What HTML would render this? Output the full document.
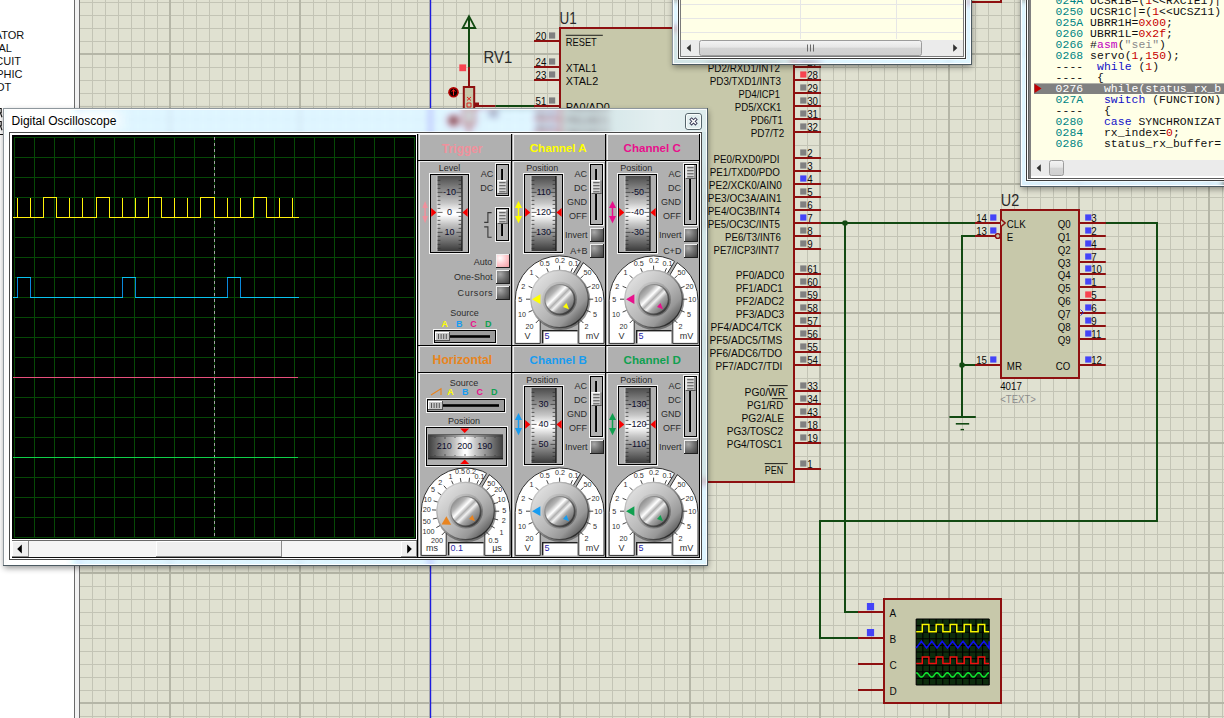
<!DOCTYPE html>
<html><head><meta charset="utf-8"><title>Digital Oscilloscope</title>
<style>
html,body{margin:0;padding:0;background:#fff;}
body{width:1224px;height:718px;overflow:hidden;position:relative;font-family:"Liberation Sans",sans-serif;}
svg{position:absolute;left:0;top:0;display:block;}
svg text{font-family:"Liberation Sans",sans-serif;}
svg text.m{font-family:"Liberation Mono",monospace;}
</style></head><body>
<svg width="1224" height="718" viewBox="0 0 1224 718">
<defs>
<filter id="blur6" color-interpolation-filters="sRGB" x="-5%" y="-5%" width="110%" height="110%"><feGaussianBlur stdDeviation="3.6"/><feComponentTransfer><feFuncR type="table" tableValues="0.357 0.417 0.477 0.537 0.597 0.657 0.717 0.777 0.837 0.897 1.000"/><feFuncG type="table" tableValues="0.271 0.351 0.431 0.511 0.591 0.671 0.751 0.831 0.911 0.991 1.000"/><feFuncB type="table" tableValues="0.306 0.396 0.486 0.576 0.666 0.756 0.846 0.936 1.000 1.000 1.000"/></feComponentTransfer></filter>
<filter id="sh" x="-10%" y="-10%" width="120%" height="120%"><feGaussianBlur stdDeviation="3"/></filter>
<filter id="glow" x="-20%" y="-60%" width="140%" height="220%"><feGaussianBlur stdDeviation="7 4"/></filter>
</defs>
<g id="schem">
<rect x="0" y="0" width="1224" height="718" fill="#ffffff"/>
<rect x="80" y="0" width="1144" height="718" fill="#e0e1d1"/>
<path d="M92.5 0V718M105.5 0V718M118.5 0V718M131.5 0V718M144.5 0V718M157.5 0V718M170.5 0V718M183.5 0V718M196.5 0V718M209.5 0V718M222.5 0V718M235.5 0V718M248.5 0V718M261.5 0V718M274.5 0V718M287.5 0V718M300.5 0V718M313.5 0V718M326.5 0V718M339.5 0V718M352.5 0V718M365.5 0V718M378.5 0V718M391.5 0V718M404.5 0V718M417.5 0V718M430.5 0V718M443.5 0V718M456.5 0V718M469.5 0V718M482.5 0V718M495.5 0V718M508.5 0V718M521.5 0V718M534.5 0V718M547.5 0V718M560.5 0V718M573.5 0V718M586.5 0V718M599.5 0V718M612.5 0V718M625.5 0V718M638.5 0V718M651.5 0V718M664.5 0V718M677.5 0V718M690.5 0V718M703.5 0V718M716.5 0V718M729.5 0V718M742.5 0V718M755.5 0V718M768.5 0V718M781.5 0V718M794.5 0V718M807.5 0V718M820.5 0V718M833.5 0V718M845.5 0V718M858.5 0V718M871.5 0V718M884.5 0V718M897.5 0V718M910.5 0V718M923.5 0V718M936.5 0V718M949.5 0V718M962.5 0V718M975.5 0V718M988.5 0V718M1001.5 0V718M1014.5 0V718M1027.5 0V718M1040.5 0V718M1053.5 0V718M1066.5 0V718M1079.5 0V718M1092.5 0V718M1105.5 0V718M1118.5 0V718M1131.5 0V718M1144.5 0V718M1157.5 0V718M1170.5 0V718M1183.5 0V718M1196.5 0V718M1209.5 0V718M1222.5 0V718M80 2.5H1224M80 15.5H1224M80 28.5H1224M80 41.5H1224M80 54.5H1224M80 67.5H1224M80 80.5H1224M80 93.5H1224M80 106.5H1224M80 119.5H1224M80 132.5H1224M80 145.5H1224M80 158.5H1224M80 171.5H1224M80 184.5H1224M80 197.5H1224M80 210.5H1224M80 223.5H1224M80 236.5H1224M80 249.5H1224M80 262.5H1224M80 274.5H1224M80 287.5H1224M80 300.5H1224M80 313.5H1224M80 326.5H1224M80 339.5H1224M80 352.5H1224M80 365.5H1224M80 378.5H1224M80 391.5H1224M80 404.5H1224M80 417.5H1224M80 430.5H1224M80 443.5H1224M80 456.5H1224M80 469.5H1224M80 482.5H1224M80 495.5H1224M80 508.5H1224M80 521.5H1224M80 534.5H1224M80 547.5H1224M80 560.5H1224M80 573.5H1224M80 586.5H1224M80 599.5H1224M80 612.5H1224M80 625.5H1224M80 638.5H1224M80 651.5H1224M80 664.5H1224M80 677.5H1224M80 690.5H1224M80 703.5H1224M80 716.5H1224" stroke="#c3c4b5" stroke-width="1" fill="none" shape-rendering="crispEdges"/>
<path d="M170 0V718M300 0V718M430 0V718M560 0V718M690 0V718M820 0V718M949 0V718M1079 0V718M1209 0V718M80 54H1224M80 184H1224M80 313H1224M80 443H1224M80 573H1224M80 703H1224" stroke="#b5b6a7" stroke-width="2" fill="none" shape-rendering="crispEdges"/>
<rect x="429.9" y="0" width="1.3" height="718" fill="#1c1ce0"/>
<rect x="0" y="0" width="74" height="718" fill="#ffffff"/>
<rect x="74" y="0" width="1" height="718" fill="#6a6a6a"/>
<rect x="75" y="0" width="4" height="718" fill="#f2f2f2"/>
<rect x="79" y="0" width="1" height="718" fill="#707070"/>





<path d="M-2 108.5h3.2v4.2h-3.2M0.4 112.7l1.6 4.6" stroke="#101010" stroke-width="1.1" fill="none"/>
<path d="M-2 121.5h3.2v4.2h-3.2M0.4 125.7l1.6 4.6" stroke="#101010" stroke-width="1.1" fill="none"/>
<rect x="0" y="134" width="3" height="1" fill="#101010"/>
<text x="24.3" y="38.7" font-size="11" fill="#101010" text-anchor="end">ATOR</text>
<text x="12.0" y="51.7" font-size="11" fill="#101010" text-anchor="end">AL</text>
<text x="21.0" y="64.7" font-size="11" fill="#101010" text-anchor="end">CUIT</text>
<text x="22.5" y="77.7" font-size="11" fill="#101010" text-anchor="end">PHIC</text>
<text x="11.2" y="90.7" font-size="11" fill="#101010" text-anchor="end">OT</text>
<rect x="900" y="-30" width="101.0" height="32.0" fill="#dde3c6" stroke="#8e1010" stroke-width="2"/>
<rect x="468.0" y="18.0" width="2" height="49.0" fill="#124a12"/>
<rect x="468.0" y="67.0" width="2" height="20.0" fill="#8e1010"/>
<path d="M469.0 16.2L462.7 28.0H475.3Z" fill="none" stroke="#124a12" stroke-width="1.8" stroke-linejoin="miter"/>
<rect x="459.3" y="64.4" width="6.8" height="6.8" fill="#f84450"/>
<rect x="463.8" y="87" width="10.4" height="38" fill="#c7c8aa" stroke="#8e1010" stroke-width="2"/>
<rect x="468.0" y="125.0" width="2" height="25.0" fill="#8e1010"/>
<circle cx="453.5" cy="120.6" r="5.6" fill="#b00000"/><circle cx="453.5" cy="120.6" r="3.6" fill="#100000"/>
<rect x="489" y="110" width="9" height="7" fill="#707878"/>
<path d="M467 97l4 3.5m0-3.5l-4 3.5M467 103h4v4h-4z" stroke="#e01010" stroke-width="0.9" fill="none"/>
<rect x="475" y="102.5" width="4" height="4" fill="#8e1010"/>
<rect x="475.0" y="105.0" width="20.5" height="2" fill="#8e1010"/>
<rect x="495.5" y="105.0" width="38.5" height="2" fill="#124a12"/>
<circle cx="453.5" cy="92.3" r="5.3" fill="#b00000"/><circle cx="453.5" cy="92.3" r="3.6" fill="#100000"/>
<path d="M453.5 95.3v-5.5m-1.8 2l1.8-2.2l1.8 2.2" stroke="#ff2020" stroke-width="1" fill="none"/>
<text x="483.6" y="62.9" font-size="15.9" fill="#2a2a2a" textLength="28.6" lengthAdjust="spacingAndGlyphs" >RV1</text>
<rect x="560.0" y="28.0" width="234.0" height="454.0" fill="#c7c8aa" stroke="#8e1010" stroke-width="2"/>
<text x="559.6" y="23.6" font-size="15.9" fill="#2a2a2a" textLength="17.2" lengthAdjust="spacingAndGlyphs" >U1</text>
<rect x="534.0" y="40.0" width="26.0" height="2" fill="#8e1010"/>
<text x="535.6" y="40.0" font-size="10.6" fill="#0a0a0a" textLength="10.8" lengthAdjust="spacingAndGlyphs" >20</text>
<rect x="549.0" y="32.4" width="6.2" height="6.2" fill="#808080"/>
<text x="565.8" y="45.9" font-size="10.6" fill="#0a0a0a" textLength="31.0" lengthAdjust="spacingAndGlyphs" >RESET</text>
<rect x="565.8" y="34.8" width="37.0" height="0.9" fill="#0a0a0a"/>
<rect x="534.0" y="66.0" width="26.0" height="2" fill="#8e1010"/>
<text x="535.6" y="66.0" font-size="10.6" fill="#0a0a0a" textLength="10.8" lengthAdjust="spacingAndGlyphs" >24</text>
<rect x="549.0" y="58.4" width="6.2" height="6.2" fill="#808080"/>
<text x="565.8" y="71.9" font-size="10.6" fill="#0a0a0a" textLength="31.0" lengthAdjust="spacingAndGlyphs" >XTAL1</text>
<rect x="534.0" y="79.0" width="26.0" height="2" fill="#8e1010"/>
<text x="535.6" y="79.0" font-size="10.6" fill="#0a0a0a" textLength="10.8" lengthAdjust="spacingAndGlyphs" >23</text>
<rect x="549.0" y="71.4" width="6.2" height="6.2" fill="#808080"/>
<text x="565.8" y="84.9" font-size="10.6" fill="#0a0a0a" textLength="32.4" lengthAdjust="spacingAndGlyphs" >XTAL2</text>
<rect x="534.0" y="105.0" width="26.0" height="2" fill="#8e1010"/>
<text x="535.6" y="105.0" font-size="10.6" fill="#0a0a0a" textLength="10.8" lengthAdjust="spacingAndGlyphs" >51</text>
<rect x="549.0" y="97.4" width="6.2" height="6.2" fill="#808080"/>
<text x="565.8" y="110.9" font-size="10.6" fill="#0a0a0a" textLength="44.0" lengthAdjust="spacingAndGlyphs" >PA0/AD0</text>
<rect x="534.0" y="118.0" width="26.0" height="2" fill="#8e1010"/>
<text x="535.6" y="118.0" font-size="10.6" fill="#0a0a0a" textLength="10.8" lengthAdjust="spacingAndGlyphs" >50</text>
<rect x="549.0" y="110.4" width="6.2" height="6.2" fill="#808080"/>
<text x="565.8" y="123.9" font-size="10.6" fill="#0a0a0a" textLength="44.0" lengthAdjust="spacingAndGlyphs" >PA1/AD1</text>
<rect x="534.0" y="131.0" width="26.0" height="2" fill="#8e1010"/>
<text x="535.6" y="131.0" font-size="10.6" fill="#0a0a0a" textLength="10.8" lengthAdjust="spacingAndGlyphs" >49</text>
<rect x="549.0" y="123.4" width="6.2" height="6.2" fill="#808080"/>
<text x="565.8" y="136.9" font-size="10.6" fill="#0a0a0a" textLength="44.0" lengthAdjust="spacingAndGlyphs" >PA2/AD2</text>
<rect x="794.0" y="66.0" width="27.0" height="2" fill="#8e1010"/>
<rect x="800.2" y="58.4" width="6.2" height="6.2" fill="#808080"/>
<text x="807.2" y="66.0" font-size="10.6" fill="#0a0a0a" textLength="10.8" lengthAdjust="spacingAndGlyphs" >27</text>
<text x="707.8" y="72.0" font-size="10.6" fill="#0a0a0a" textLength="72.1" lengthAdjust="spacingAndGlyphs" >PD2/RXD1/INT2</text>
<rect x="794.0" y="79.0" width="27.0" height="2" fill="#8e1010"/>
<rect x="800.2" y="71.4" width="6.2" height="6.2" fill="#f84450"/>
<text x="807.2" y="79.0" font-size="10.6" fill="#0a0a0a" textLength="10.8" lengthAdjust="spacingAndGlyphs" >28</text>
<text x="709.7" y="85.0" font-size="10.6" fill="#0a0a0a" textLength="71.2" lengthAdjust="spacingAndGlyphs" >PD3/TXD1/INT3</text>
<rect x="794.0" y="92.0" width="27.0" height="2" fill="#8e1010"/>
<rect x="800.2" y="84.4" width="6.2" height="6.2" fill="#808080"/>
<text x="807.2" y="92.0" font-size="10.6" fill="#0a0a0a" textLength="10.8" lengthAdjust="spacingAndGlyphs" >29</text>
<text x="738.6" y="98.0" font-size="10.6" fill="#0a0a0a" textLength="41.3" lengthAdjust="spacingAndGlyphs" >PD4/ICP1</text>
<rect x="794.0" y="105.0" width="27.0" height="2" fill="#8e1010"/>
<rect x="800.2" y="97.4" width="6.2" height="6.2" fill="#808080"/>
<text x="807.2" y="105.0" font-size="10.6" fill="#0a0a0a" textLength="10.8" lengthAdjust="spacingAndGlyphs" >30</text>
<text x="734.7" y="111.0" font-size="10.6" fill="#0a0a0a" textLength="46.8" lengthAdjust="spacingAndGlyphs" >PD5/XCK1</text>
<rect x="794.0" y="118.0" width="27.0" height="2" fill="#8e1010"/>
<rect x="800.2" y="110.4" width="6.2" height="6.2" fill="#808080"/>
<text x="807.2" y="118.0" font-size="10.6" fill="#0a0a0a" textLength="10.8" lengthAdjust="spacingAndGlyphs" >31</text>
<text x="750.7" y="124.0" font-size="10.6" fill="#0a0a0a" textLength="32.1" lengthAdjust="spacingAndGlyphs" >PD6/T1</text>
<rect x="794.0" y="131.0" width="27.0" height="2" fill="#8e1010"/>
<rect x="800.2" y="123.4" width="6.2" height="6.2" fill="#808080"/>
<text x="807.2" y="131.0" font-size="10.6" fill="#0a0a0a" textLength="10.8" lengthAdjust="spacingAndGlyphs" >32</text>
<text x="750.7" y="137.0" font-size="10.6" fill="#0a0a0a" textLength="33.5" lengthAdjust="spacingAndGlyphs" >PD7/T2</text>
<rect x="794.0" y="157.0" width="27.0" height="2" fill="#8e1010"/>
<rect x="800.2" y="149.4" width="6.2" height="6.2" fill="#808080"/>
<text x="807.2" y="157.0" font-size="10.6" fill="#0a0a0a" textLength="5.4" lengthAdjust="spacingAndGlyphs" >2</text>
<text x="713.6" y="163.0" font-size="10.6" fill="#0a0a0a" textLength="65.9" lengthAdjust="spacingAndGlyphs" >PE0/RXD0/PDI</text>
<rect x="794.0" y="170.0" width="27.0" height="2" fill="#8e1010"/>
<rect x="800.2" y="162.4" width="6.2" height="6.2" fill="#808080"/>
<text x="807.2" y="170.0" font-size="10.6" fill="#0a0a0a" textLength="5.4" lengthAdjust="spacingAndGlyphs" >3</text>
<text x="709.7" y="176.0" font-size="10.6" fill="#0a0a0a" textLength="70.2" lengthAdjust="spacingAndGlyphs" >PE1/TXD0/PDO</text>
<rect x="794.0" y="183.0" width="27.0" height="2" fill="#8e1010"/>
<rect x="800.2" y="175.4" width="6.2" height="6.2" fill="#4444f8"/>
<text x="807.2" y="183.0" font-size="10.6" fill="#0a0a0a" textLength="5.4" lengthAdjust="spacingAndGlyphs" >4</text>
<text x="708.8" y="189.0" font-size="10.6" fill="#0a0a0a" textLength="73.1" lengthAdjust="spacingAndGlyphs" >PE2/XCK0/AIN0</text>
<rect x="794.0" y="196.0" width="27.0" height="2" fill="#8e1010"/>
<rect x="800.2" y="188.4" width="6.2" height="6.2" fill="#808080"/>
<text x="807.2" y="196.0" font-size="10.6" fill="#0a0a0a" textLength="5.4" lengthAdjust="spacingAndGlyphs" >5</text>
<text x="707.8" y="202.0" font-size="10.6" fill="#0a0a0a" textLength="73.7" lengthAdjust="spacingAndGlyphs" >PE3/OC3A/AIN1</text>
<rect x="794.0" y="209.0" width="27.0" height="2" fill="#8e1010"/>
<rect x="800.2" y="201.4" width="6.2" height="6.2" fill="#808080"/>
<text x="807.2" y="209.0" font-size="10.6" fill="#0a0a0a" textLength="5.4" lengthAdjust="spacingAndGlyphs" >6</text>
<text x="707.8" y="215.0" font-size="10.6" fill="#0a0a0a" textLength="72.1" lengthAdjust="spacingAndGlyphs" >PE4/OC3B/INT4</text>
<rect x="794.0" y="222.0" width="27.0" height="2" fill="#8e1010"/>
<rect x="800.2" y="214.4" width="6.2" height="6.2" fill="#4444f8"/>
<text x="807.2" y="222.0" font-size="10.6" fill="#0a0a0a" textLength="5.4" lengthAdjust="spacingAndGlyphs" >7</text>
<text x="707.8" y="228.0" font-size="10.6" fill="#0a0a0a" textLength="72.1" lengthAdjust="spacingAndGlyphs" >PE5/OC3C/INT5</text>
<rect x="794.0" y="235.0" width="27.0" height="2" fill="#8e1010"/>
<rect x="800.2" y="227.4" width="6.2" height="6.2" fill="#808080"/>
<text x="807.2" y="235.0" font-size="10.6" fill="#0a0a0a" textLength="5.4" lengthAdjust="spacingAndGlyphs" >8</text>
<text x="725.0" y="241.0" font-size="10.6" fill="#0a0a0a" textLength="55.9" lengthAdjust="spacingAndGlyphs" >PE6/T3/INT6</text>
<rect x="794.0" y="248.0" width="27.0" height="2" fill="#8e1010"/>
<rect x="800.2" y="240.4" width="6.2" height="6.2" fill="#808080"/>
<text x="807.2" y="248.0" font-size="10.6" fill="#0a0a0a" textLength="5.4" lengthAdjust="spacingAndGlyphs" >9</text>
<text x="713.6" y="254.0" font-size="10.6" fill="#0a0a0a" textLength="65.4" lengthAdjust="spacingAndGlyphs" >PE7/ICP3/INT7</text>
<rect x="794.0" y="273.0" width="27.0" height="2" fill="#8e1010"/>
<rect x="800.2" y="265.4" width="6.2" height="6.2" fill="#808080"/>
<text x="807.2" y="273.0" font-size="10.6" fill="#0a0a0a" textLength="10.8" lengthAdjust="spacingAndGlyphs" >61</text>
<text x="735.7" y="279.0" font-size="10.6" fill="#0a0a0a" textLength="48.5" lengthAdjust="spacingAndGlyphs" >PF0/ADC0</text>
<rect x="794.0" y="286.0" width="27.0" height="2" fill="#8e1010"/>
<rect x="800.2" y="278.4" width="6.2" height="6.2" fill="#808080"/>
<text x="807.2" y="286.0" font-size="10.6" fill="#0a0a0a" textLength="10.8" lengthAdjust="spacingAndGlyphs" >60</text>
<text x="735.7" y="292.0" font-size="10.6" fill="#0a0a0a" textLength="47.1" lengthAdjust="spacingAndGlyphs" >PF1/ADC1</text>
<rect x="794.0" y="299.0" width="27.0" height="2" fill="#8e1010"/>
<rect x="800.2" y="291.4" width="6.2" height="6.2" fill="#808080"/>
<text x="807.2" y="299.0" font-size="10.6" fill="#0a0a0a" textLength="10.8" lengthAdjust="spacingAndGlyphs" >59</text>
<text x="735.7" y="305.0" font-size="10.6" fill="#0a0a0a" textLength="48.5" lengthAdjust="spacingAndGlyphs" >PF2/ADC2</text>
<rect x="794.0" y="312.0" width="27.0" height="2" fill="#8e1010"/>
<rect x="800.2" y="304.4" width="6.2" height="6.2" fill="#808080"/>
<text x="807.2" y="312.0" font-size="10.6" fill="#0a0a0a" textLength="10.8" lengthAdjust="spacingAndGlyphs" >58</text>
<text x="735.7" y="318.0" font-size="10.6" fill="#0a0a0a" textLength="48.5" lengthAdjust="spacingAndGlyphs" >PF3/ADC3</text>
<rect x="794.0" y="325.0" width="27.0" height="2" fill="#8e1010"/>
<rect x="800.2" y="317.4" width="6.2" height="6.2" fill="#808080"/>
<text x="807.2" y="325.0" font-size="10.6" fill="#0a0a0a" textLength="10.8" lengthAdjust="spacingAndGlyphs" >57</text>
<text x="710.6" y="331.0" font-size="10.6" fill="#0a0a0a" textLength="71.3" lengthAdjust="spacingAndGlyphs" >PF4/ADC4/TCK</text>
<rect x="794.0" y="338.0" width="27.0" height="2" fill="#8e1010"/>
<rect x="800.2" y="330.4" width="6.2" height="6.2" fill="#808080"/>
<text x="807.2" y="338.0" font-size="10.6" fill="#0a0a0a" textLength="10.8" lengthAdjust="spacingAndGlyphs" >56</text>
<text x="709.5" y="344.0" font-size="10.6" fill="#0a0a0a" textLength="72.7" lengthAdjust="spacingAndGlyphs" >PF5/ADC5/TMS</text>
<rect x="794.0" y="351.0" width="27.0" height="2" fill="#8e1010"/>
<rect x="800.2" y="343.4" width="6.2" height="6.2" fill="#808080"/>
<text x="807.2" y="351.0" font-size="10.6" fill="#0a0a0a" textLength="10.8" lengthAdjust="spacingAndGlyphs" >55</text>
<text x="709.5" y="357.0" font-size="10.6" fill="#0a0a0a" textLength="72.7" lengthAdjust="spacingAndGlyphs" >PF6/ADC6/TDO</text>
<rect x="794.0" y="364.0" width="27.0" height="2" fill="#8e1010"/>
<rect x="800.2" y="356.4" width="6.2" height="6.2" fill="#808080"/>
<text x="807.2" y="364.0" font-size="10.6" fill="#0a0a0a" textLength="10.8" lengthAdjust="spacingAndGlyphs" >54</text>
<text x="715.5" y="370.0" font-size="10.6" fill="#0a0a0a" textLength="66.7" lengthAdjust="spacingAndGlyphs" >PF7/ADC7/TDI</text>
<rect x="794.0" y="390.0" width="27.0" height="2" fill="#8e1010"/>
<rect x="800.2" y="382.4" width="6.2" height="6.2" fill="#808080"/>
<text x="807.2" y="390.0" font-size="10.6" fill="#0a0a0a" textLength="10.8" lengthAdjust="spacingAndGlyphs" >33</text>
<text x="744.6" y="396.0" font-size="10.6" fill="#0a0a0a" textLength="40.6" lengthAdjust="spacingAndGlyphs" >PG0/WR</text>
<rect x="794.0" y="403.0" width="27.0" height="2" fill="#8e1010"/>
<rect x="800.2" y="395.4" width="6.2" height="6.2" fill="#808080"/>
<text x="807.2" y="403.0" font-size="10.6" fill="#0a0a0a" textLength="10.8" lengthAdjust="spacingAndGlyphs" >34</text>
<text x="746.9" y="409.0" font-size="10.6" fill="#0a0a0a" textLength="36.3" lengthAdjust="spacingAndGlyphs" >PG1/RD</text>
<rect x="794.0" y="416.0" width="27.0" height="2" fill="#8e1010"/>
<rect x="800.2" y="408.4" width="6.2" height="6.2" fill="#808080"/>
<text x="807.2" y="416.0" font-size="10.6" fill="#0a0a0a" textLength="10.8" lengthAdjust="spacingAndGlyphs" >43</text>
<text x="741.4" y="422.0" font-size="10.6" fill="#0a0a0a" textLength="42.6" lengthAdjust="spacingAndGlyphs" >PG2/ALE</text>
<rect x="794.0" y="429.0" width="27.0" height="2" fill="#8e1010"/>
<rect x="800.2" y="421.4" width="6.2" height="6.2" fill="#808080"/>
<text x="807.2" y="429.0" font-size="10.6" fill="#0a0a0a" textLength="10.8" lengthAdjust="spacingAndGlyphs" >18</text>
<text x="726.8" y="435.0" font-size="10.6" fill="#0a0a0a" textLength="56.4" lengthAdjust="spacingAndGlyphs" >PG3/TOSC2</text>
<rect x="794.0" y="442.0" width="27.0" height="2" fill="#8e1010"/>
<rect x="800.2" y="434.4" width="6.2" height="6.2" fill="#808080"/>
<text x="807.2" y="442.0" font-size="10.6" fill="#0a0a0a" textLength="10.8" lengthAdjust="spacingAndGlyphs" >19</text>
<text x="726.8" y="448.0" font-size="10.6" fill="#0a0a0a" textLength="55.4" lengthAdjust="spacingAndGlyphs" >PG4/TOSC1</text>
<rect x="794.0" y="468.0" width="27.0" height="2" fill="#8e1010"/>
<rect x="800.2" y="460.4" width="6.2" height="6.2" fill="#808080"/>
<text x="807.2" y="468.0" font-size="10.6" fill="#0a0a0a" textLength="5.4" lengthAdjust="spacingAndGlyphs" >1</text>
<text x="764.7" y="474.0" font-size="10.6" fill="#0a0a0a" textLength="18.5" lengthAdjust="spacingAndGlyphs" >PEN</text>
<rect x="768.9" y="385.2" width="18.8" height="0.9" fill="#0a0a0a"/>
<rect x="771.9" y="398.2" width="15.8" height="0.9" fill="#0a0a0a"/>
<rect x="764.7" y="463.2" width="23.0" height="0.9" fill="#0a0a0a"/>
<rect x="821.0" y="222.0" width="154.0" height="2" fill="#124a12"/>
<rect x="842.4" y="220.4" width="5.2" height="5.2" rx="1.6" fill="#124a12"/>
<rect x="844.0" y="223.0" width="2" height="389.0" fill="#124a12"/>
<rect x="844.0" y="611.0" width="14.0" height="2" fill="#124a12"/>
<rect x="819.0" y="637.0" width="39.0" height="2" fill="#124a12"/>
<rect x="819.0" y="521.0" width="2" height="118.0" fill="#124a12"/>
<rect x="819.0" y="520.0" width="339.0" height="2" fill="#124a12"/>
<rect x="1156.0" y="223.0" width="2" height="298.0" fill="#124a12"/>
<rect x="1105.0" y="222.0" width="53.0" height="2" fill="#124a12"/>
<rect x="1001.0" y="210.0" width="78.0" height="168.0" fill="#c7c8aa" stroke="#8e1010" stroke-width="2"/>
<text x="1000.8" y="205.6" font-size="15.9" fill="#2a2a2a" textLength="18.4" lengthAdjust="spacingAndGlyphs" >U2</text>
<rect x="975.0" y="222.0" width="26.0" height="2" fill="#8e1010"/>
<text x="976.2" y="222.0" font-size="10.6" fill="#0a0a0a" textLength="10.8" lengthAdjust="spacingAndGlyphs" >14</text>
<rect x="990.2" y="214.4" width="6.2" height="6.2" fill="#4444f8"/>
<text x="1006.8" y="228.0" font-size="10.6" fill="#0a0a0a" textLength="18.9" lengthAdjust="spacingAndGlyphs" >CLK</text>
<rect x="975.0" y="235.0" width="26.0" height="2" fill="#8e1010"/>
<text x="976.2" y="235.0" font-size="10.6" fill="#0a0a0a" textLength="10.8" lengthAdjust="spacingAndGlyphs" >13</text>
<rect x="990.2" y="227.4" width="6.2" height="6.2" fill="#4444f8"/>
<text x="1006.8" y="241.0" font-size="10.6" fill="#0a0a0a" textLength="6.5" lengthAdjust="spacingAndGlyphs" >E</text>
<rect x="975.0" y="364.0" width="26.0" height="2" fill="#8e1010"/>
<text x="976.2" y="364.0" font-size="10.6" fill="#0a0a0a" textLength="10.8" lengthAdjust="spacingAndGlyphs" >15</text>
<rect x="990.2" y="356.4" width="6.2" height="6.2" fill="#4444f8"/>
<text x="1006.8" y="370.0" font-size="10.6" fill="#0a0a0a" textLength="15.1" lengthAdjust="spacingAndGlyphs" >MR</text>
<path d="M1001.0 219.4l4.2 3.6l-4.2 3.6" fill="#c7c8aa" stroke="#8e1010" stroke-width="1.4"/>
<circle cx="997.8" cy="236.0" r="2.4" fill="#c7c8aa" stroke="#8e1010" stroke-width="1.4"/>
<rect x="1079.0" y="222.0" width="26.8" height="2" fill="#8e1010"/>
<rect x="1085.2" y="214.4" width="6.2" height="6.2" fill="#4444f8"/>
<text x="1091.2" y="222.0" font-size="10.6" fill="#0a0a0a" textLength="5.4" lengthAdjust="spacingAndGlyphs" >3</text>
<text x="1057.8" y="228.0" font-size="10.6" fill="#0a0a0a" textLength="12.9" lengthAdjust="spacingAndGlyphs" >Q0</text>
<rect x="1079.0" y="235.0" width="26.8" height="2" fill="#8e1010"/>
<rect x="1085.2" y="227.4" width="6.2" height="6.2" fill="#4444f8"/>
<text x="1091.2" y="235.0" font-size="10.6" fill="#0a0a0a" textLength="5.4" lengthAdjust="spacingAndGlyphs" >2</text>
<text x="1057.8" y="241.0" font-size="10.6" fill="#0a0a0a" textLength="12.9" lengthAdjust="spacingAndGlyphs" >Q1</text>
<rect x="1079.0" y="248.0" width="26.8" height="2" fill="#8e1010"/>
<rect x="1085.2" y="240.4" width="6.2" height="6.2" fill="#4444f8"/>
<text x="1091.2" y="248.0" font-size="10.6" fill="#0a0a0a" textLength="5.4" lengthAdjust="spacingAndGlyphs" >4</text>
<text x="1057.8" y="254.0" font-size="10.6" fill="#0a0a0a" textLength="12.9" lengthAdjust="spacingAndGlyphs" >Q2</text>
<rect x="1079.0" y="261.0" width="26.8" height="2" fill="#8e1010"/>
<rect x="1085.2" y="253.4" width="6.2" height="6.2" fill="#4444f8"/>
<text x="1091.2" y="261.0" font-size="10.6" fill="#0a0a0a" textLength="5.4" lengthAdjust="spacingAndGlyphs" >7</text>
<text x="1057.8" y="267.0" font-size="10.6" fill="#0a0a0a" textLength="12.9" lengthAdjust="spacingAndGlyphs" >Q3</text>
<rect x="1079.0" y="273.0" width="26.8" height="2" fill="#8e1010"/>
<rect x="1085.2" y="265.4" width="6.2" height="6.2" fill="#4444f8"/>
<text x="1091.2" y="273.0" font-size="10.6" fill="#0a0a0a" textLength="10.8" lengthAdjust="spacingAndGlyphs" >10</text>
<text x="1057.8" y="279.0" font-size="10.6" fill="#0a0a0a" textLength="12.9" lengthAdjust="spacingAndGlyphs" >Q4</text>
<rect x="1079.0" y="286.0" width="26.8" height="2" fill="#8e1010"/>
<rect x="1085.2" y="278.4" width="6.2" height="6.2" fill="#4444f8"/>
<text x="1091.2" y="286.0" font-size="10.6" fill="#0a0a0a" textLength="5.4" lengthAdjust="spacingAndGlyphs" >1</text>
<text x="1057.8" y="292.0" font-size="10.6" fill="#0a0a0a" textLength="12.9" lengthAdjust="spacingAndGlyphs" >Q5</text>
<rect x="1079.0" y="299.0" width="26.8" height="2" fill="#8e1010"/>
<rect x="1085.2" y="291.4" width="6.2" height="6.2" fill="#f84450"/>
<text x="1091.2" y="299.0" font-size="10.6" fill="#0a0a0a" textLength="5.4" lengthAdjust="spacingAndGlyphs" >5</text>
<text x="1057.8" y="305.0" font-size="10.6" fill="#0a0a0a" textLength="12.9" lengthAdjust="spacingAndGlyphs" >Q6</text>
<rect x="1079.0" y="312.0" width="26.8" height="2" fill="#8e1010"/>
<rect x="1085.2" y="304.4" width="6.2" height="6.2" fill="#4444f8"/>
<text x="1091.2" y="312.0" font-size="10.6" fill="#0a0a0a" textLength="5.4" lengthAdjust="spacingAndGlyphs" >6</text>
<text x="1057.8" y="318.0" font-size="10.6" fill="#0a0a0a" textLength="12.9" lengthAdjust="spacingAndGlyphs" >Q7</text>
<rect x="1079.0" y="325.0" width="26.8" height="2" fill="#8e1010"/>
<rect x="1085.2" y="317.4" width="6.2" height="6.2" fill="#4444f8"/>
<text x="1091.2" y="325.0" font-size="10.6" fill="#0a0a0a" textLength="5.4" lengthAdjust="spacingAndGlyphs" >9</text>
<text x="1057.8" y="331.0" font-size="10.6" fill="#0a0a0a" textLength="12.9" lengthAdjust="spacingAndGlyphs" >Q8</text>
<rect x="1079.0" y="338.0" width="26.8" height="2" fill="#8e1010"/>
<rect x="1085.2" y="330.4" width="6.2" height="6.2" fill="#4444f8"/>
<text x="1091.2" y="338.0" font-size="10.6" fill="#0a0a0a" textLength="10.1" lengthAdjust="spacingAndGlyphs" >11</text>
<text x="1057.8" y="344.0" font-size="10.6" fill="#0a0a0a" textLength="12.9" lengthAdjust="spacingAndGlyphs" >Q9</text>
<rect x="1079.0" y="364.0" width="26.8" height="2" fill="#8e1010"/>
<rect x="1085.2" y="356.4" width="6.2" height="6.2" fill="#4444f8"/>
<text x="1091.2" y="364.0" font-size="10.6" fill="#0a0a0a" textLength="10.8" lengthAdjust="spacingAndGlyphs" >12</text>
<text x="1055.8" y="370.0" font-size="10.6" fill="#0a0a0a" textLength="14.5" lengthAdjust="spacingAndGlyphs" >CO</text>
<path d="M1080.5 309.5l3 3l-3 3.2" stroke="#2020d0" stroke-width="0.9" fill="none"/>
<text x="1000.2" y="389.8" font-size="10.6" fill="#0a0a0a" textLength="21.6" lengthAdjust="spacingAndGlyphs" >4017</text>
<text x="1000.2" y="403.0" font-size="10.6" fill="#8c8c8c" textLength="35.8" lengthAdjust="spacingAndGlyphs" >&lt;TEXT&gt;</text>
<rect x="961.0" y="235.0" width="14.0" height="2" fill="#124a12"/>
<rect x="961.0" y="235.0" width="2" height="182.0" fill="#124a12"/>
<rect x="962.0" y="364.0" width="13.0" height="2" fill="#124a12"/>
<rect x="959.4" y="362.4" width="5.2" height="5.2" rx="1.6" fill="#124a12"/>
<rect x="949.4" y="416.0" width="26.4" height="2" fill="#124a12"/>
<rect x="955.8" y="423.0" width="13.4" height="1.6" fill="#124a12"/>
<rect x="960.6" y="428.9" width="3.4" height="1.4" fill="#124a12"/>
<rect x="884.0" y="599.0" width="117.0" height="104.0" fill="#c7c8aa" stroke="#8e1010" stroke-width="2"/>
<rect x="858.0" y="611.0" width="26.0" height="2" fill="#8e1010"/>
<text x="889.6" y="617.0" font-size="10" fill="#0a0a0a" text-anchor="start" >A</text>
<rect x="866.9" y="603.0" width="7.2" height="7.2" fill="#4444f8"/>
<rect x="858.0" y="637.0" width="26.0" height="2" fill="#8e1010"/>
<text x="889.6" y="643.0" font-size="10" fill="#0a0a0a" text-anchor="start" >B</text>
<rect x="866.9" y="629.0" width="7.2" height="7.2" fill="#4444f8"/>
<rect x="858.0" y="663.0" width="26.0" height="2" fill="#8e1010"/>
<text x="889.6" y="669.0" font-size="10" fill="#0a0a0a" text-anchor="start" >C</text>
<rect x="858.0" y="689.0" width="26.0" height="2" fill="#8e1010"/>
<text x="889.6" y="695.0" font-size="10" fill="#0a0a0a" text-anchor="start" >D</text>
<rect x="916.2" y="619.0" width="73.0" height="66.0" fill="#0d2c0d"/>
<path d="M916.20 619.0V685.0M922.84 619.0V685.0M929.47 619.0V685.0M936.11 619.0V685.0M942.75 619.0V685.0M949.38 619.0V685.0M956.02 619.0V685.0M962.65 619.0V685.0M969.29 619.0V685.0M975.93 619.0V685.0M982.56 619.0V685.0M989.20 619.0V685.0M916.2 619.00H989.2M916.2 625.60H989.2M916.2 632.20H989.2M916.2 638.80H989.2M916.2 645.40H989.2M916.2 652.00H989.2M916.2 658.60H989.2M916.2 665.20H989.2M916.2 671.80H989.2M916.2 678.40H989.2M916.2 685.00H989.2" stroke="#000" stroke-width="1.1" fill="none"/>
<path d="M916.2 631.8H922.3V624.4H928.9V631.8H936.2V624.4H942.9V631.8H950.2V624.4H956.8V631.8H964.2V624.4H970.8V631.8H978.1V624.4H984.7V631.8H989.2" stroke="#f8f800" stroke-width="1.5" fill="none" stroke-linejoin="miter"/>
<path d="M916.2 648L921.4 641.2L926.6 648L931.8 641.2L937.0 648L942.2 641.2L947.4 648L952.6 641.2L957.8 648L963.0 641.2L968.2 648L973.4 641.2L978.6 648L983.8 641.2L989.0 648L989.2 641.2" stroke="#1010f0" stroke-width="1.5" fill="none"/>
<path d="M916.2 663.6H922.3V657.0H928.9V663.6H936.2V657.0H942.9V663.6H950.2V657.0H956.8V663.6H964.2V657.0H970.8V663.6H978.1V657.0H984.7V663.6H989.2" stroke="#f01010" stroke-width="1.5" fill="none" stroke-linejoin="miter"/>
<path d="M916.2 672.70L917.0 672.95L917.8 673.65L918.6 674.63L919.4 675.68L920.2 676.55L921.0 677.04L921.8 677.04L922.6 676.55L923.4 675.68L924.2 674.63L925.0 673.65L925.8 672.95L926.6 672.70L927.4 672.95L928.2 673.65L929.0 674.63L929.8 675.68L930.6 676.55L931.4 677.04L932.2 677.04L933.0 676.55L933.8 675.68L934.6 674.63L935.4 673.65L936.2 672.95L937.0 672.70L937.8 672.95L938.6 673.65L939.4 674.63L940.2 675.68L941.0 676.55L941.8 677.04L942.6 677.04L943.4 676.55L944.2 675.68L945.0 674.63L945.8 673.65L946.6 672.95L947.4 672.70L948.2 672.95L949.0 673.65L949.8 674.63L950.6 675.68L951.4 676.55L952.2 677.04L953.0 677.04L953.8 676.55L954.6 675.68L955.4 674.63L956.2 673.65L957.0 672.95L957.8 672.70L958.6 672.95L959.4 673.65L960.2 674.63L961.0 675.68L961.8 676.55L962.6 677.04L963.4 677.04L964.2 676.55L965.0 675.68L965.8 674.63L966.6 673.65L967.4 672.95L968.2 672.70L969.0 672.95L969.8 673.65L970.6 674.63L971.4 675.68L972.2 676.55L973.0 677.04L973.8 677.04L974.6 676.55L975.4 675.68L976.2 674.63L977.0 673.65L977.8 672.95L978.6 672.70L979.4 672.95L980.2 673.65L981.0 674.63L981.8 675.68L982.6 676.55L983.4 677.04L984.2 677.04L985.0 676.55L985.8 675.68L986.6 674.63L987.4 673.65L988.2 672.95L989.0 672.70" stroke="#10e830" stroke-width="1.5" fill="none"/>
</g>
<defs>
<clipPath id="frames">
<rect x="672" y="-30" width="300" height="95"/>
<rect x="1020" y="-30" width="240" height="217"/>
<rect x="3" y="108" width="705" height="458"/>
</clipPath>
<linearGradient id="sbthumb" x1="0" y1="0" x2="0" y2="1"><stop offset="0" stop-color="#f4f4f4"/><stop offset="0.45" stop-color="#e6e6e6"/><stop offset="0.5" stop-color="#d4d4d4"/><stop offset="1" stop-color="#cfcfcf"/></linearGradient>
</defs>
<rect x="673" y="-27" width="299" height="94" fill="#000" opacity="0.42" filter="url(#sh)"/>
<rect x="1021" y="-27" width="239" height="216" fill="#000" opacity="0.42" filter="url(#sh)"/>
<rect x="4" y="111" width="704" height="457" fill="#000" opacity="0.42" filter="url(#sh)"/>
<g clip-path="url(#frames)">
<g filter="url(#blur6)"><use href="#schem"/></g>
<rect x="2" y="111" width="118" height="19" fill="#ffffff" opacity="0.9" filter="url(#glow)"/>
<linearGradient id="tbhl" x1="0" y1="0" x2="1" y2="0"><stop offset="0" stop-color="#fff" stop-opacity="0"/><stop offset="0.6" stop-color="#fff" stop-opacity="0.4"/><stop offset="1" stop-color="#fff" stop-opacity="0.25"/></linearGradient>
<rect x="590" y="110" width="117" height="22" fill="url(#tbhl)"/>
</g>
<rect x="672" y="-30" width="300" height="1" fill="#8e979d"/><rect x="672" y="-30" width="1" height="95" fill="#8e979d"/>
<rect x="971" y="-30" width="1" height="95" fill="#4c5a62"/><rect x="672" y="64" width="300" height="1" fill="#4c5a62"/>
<rect x="673.5" y="-28.5" width="297" height="92" fill="none" stroke="#ffffff" stroke-opacity="0.9" stroke-width="1"/>
<rect x="678.5" y="-20.5" width="287" height="79" fill="none" stroke="#3c3c3c" stroke-width="1"/>
<rect x="677.5" y="-21.5" width="289" height="81" fill="none" stroke="#ffffff" stroke-opacity="0.55" stroke-width="1"/>
<rect x="679" y="-20" width="286" height="78" fill="#ffffff"/>
<rect x="680" y="-20" width="284" height="77" fill="#7a7a7a"/>
<rect x="681" y="-20" width="282" height="76" fill="#ffffe7"/>
<rect x="681" y="4" width="282" height="1" fill="#e6e6e6"/>
<rect x="681" y="18" width="282" height="1" fill="#e6e6e6"/>
<rect x="681" y="32" width="282" height="1" fill="#e6e6e6"/>
<rect x="800" y="-5" width="1" height="44" fill="#e6e6e6"/>
<rect x="896" y="-5" width="1" height="44" fill="#e6e6e6"/>
<rect x="681" y="40" width="282" height="16" fill="#ebebeb"/>
<path d="M686.6 48.0l4.2 -3.8v7.6z" fill="#303030"/>
<path d="M957.4 48.0l-4.2 -3.8v7.6z" fill="#303030"/>
<rect x="699.5" y="40.5" width="222" height="15" rx="2" fill="url(#sbthumb)" stroke="#9c9c9c" stroke-width="1"/>
<rect x="807.0" y="44.5" width="1" height="7" fill="#6a6a6a"/>
<rect x="810.0" y="44.5" width="1" height="7" fill="#6a6a6a"/>
<rect x="813.0" y="44.5" width="1" height="7" fill="#6a6a6a"/>
<rect x="806" y="44.5" width="9" height="7" fill="none"/>
<rect x="1020" y="-30" width="240" height="1" fill="#8e979d"/><rect x="1020" y="-30" width="1" height="217" fill="#8e979d"/>
<rect x="1259" y="-30" width="1" height="217" fill="#4c5a62"/><rect x="1020" y="186" width="240" height="1" fill="#4c5a62"/>
<rect x="1021.5" y="-28.5" width="237" height="214" fill="none" stroke="#ffffff" stroke-opacity="0.9" stroke-width="1"/>
<rect x="1026.5" y="-20.5" width="214" height="201" fill="none" stroke="#3c3c3c" stroke-width="1"/>
<rect x="1025.5" y="-21.5" width="216" height="203" fill="none" stroke="#ffffff" stroke-opacity="0.55" stroke-width="1"/>
<rect x="1027" y="-20" width="213" height="200" fill="#ffffff"/>
<rect x="1028" y="-20" width="212" height="199" fill="#5c5c5c"/>
<rect x="1029" y="-20" width="211" height="198" fill="#808080"/>
<rect x="1031" y="-20" width="209" height="198" fill="#ffffff"/>
<rect x="1031" y="-20" width="209" height="196" fill="#ffffe7"/>
<rect x="1031" y="160" width="219" height="16" fill="#ebebeb"/>
<path d="M1036.6 168.0l4.2 -3.8v7.6z" fill="#303030"/>
<path d="M1244.4 168.0l-4.2 -3.8v7.6z" fill="#303030"/>
<rect x="1049.5" y="160.5" width="14" height="15" rx="2" fill="url(#sbthumb)" stroke="#9c9c9c" stroke-width="1"/>
<g class="m" font-size="11.4" xml:space="preserve">
<text class="m" x="1055.6" y="4.1" fill="#008484" textLength="27.6" lengthAdjust="spacing">024A</text>
<text class="m" x="1090.1" y="4.1" fill="#101010" textLength="55.2" lengthAdjust="spacing">UCSR1B=(</text>
<text class="m" x="1145.3" y="4.1" fill="#c80000" textLength="6.9" lengthAdjust="spacing">1</text>
<text class="m" x="1152.2" y="4.1" fill="#101010" textLength="69.0" lengthAdjust="spacing">&lt;&lt;RXCIE1)|</text>
<text class="m" x="1055.6" y="15.1" fill="#008484" textLength="27.6" lengthAdjust="spacing">0250</text>
<text class="m" x="1090.1" y="15.1" fill="#101010" textLength="62.1" lengthAdjust="spacing">UCSR1C|=(</text>
<text class="m" x="1152.2" y="15.1" fill="#c80000" textLength="6.9" lengthAdjust="spacing">1</text>
<text class="m" x="1159.1" y="15.1" fill="#101010" textLength="62.1" lengthAdjust="spacing">&lt;&lt;UCSZ11)</text>
<text class="m" x="1055.6" y="26.1" fill="#008484" textLength="27.6" lengthAdjust="spacing">025A</text>
<text class="m" x="1090.1" y="26.1" fill="#101010" textLength="48.3" lengthAdjust="spacing">UBRR1H=</text>
<text class="m" x="1138.4" y="26.1" fill="#c80000" textLength="27.6" lengthAdjust="spacing">0x00</text>
<text class="m" x="1166.0" y="26.1" fill="#101010" textLength="6.9" lengthAdjust="spacing">;</text>
<text class="m" x="1055.6" y="37.1" fill="#008484" textLength="27.6" lengthAdjust="spacing">0260</text>
<text class="m" x="1090.1" y="37.1" fill="#101010" textLength="48.3" lengthAdjust="spacing">UBRR1L=</text>
<text class="m" x="1138.4" y="37.1" fill="#c80000" textLength="27.6" lengthAdjust="spacing">0x2f</text>
<text class="m" x="1166.0" y="37.1" fill="#101010" textLength="6.9" lengthAdjust="spacing">;</text>
<text class="m" x="1055.6" y="48.1" fill="#008484" textLength="27.6" lengthAdjust="spacing">0266</text>
<text class="m" x="1090.1" y="48.1" fill="#101010" textLength="6.9" lengthAdjust="spacing">#</text>
<text class="m" x="1097.0" y="48.1" fill="#c000c0" textLength="20.7" lengthAdjust="spacing">asm</text>
<text class="m" x="1117.7" y="48.1" fill="#101010" textLength="6.9" lengthAdjust="spacing">(</text>
<text class="m" x="1124.6" y="48.1" fill="#8a8a8a" textLength="34.5" lengthAdjust="spacing">"sei"</text>
<text class="m" x="1159.1" y="48.1" fill="#101010" textLength="6.9" lengthAdjust="spacing">)</text>
<text class="m" x="1055.6" y="59.1" fill="#008484" textLength="27.6" lengthAdjust="spacing">0268</text>
<text class="m" x="1090.1" y="59.1" fill="#101010" textLength="41.4" lengthAdjust="spacing">servo(</text>
<text class="m" x="1131.5" y="59.1" fill="#c80000" textLength="6.9" lengthAdjust="spacing">1</text>
<text class="m" x="1138.4" y="59.1" fill="#101010" textLength="6.9" lengthAdjust="spacing">,</text>
<text class="m" x="1145.3" y="59.1" fill="#c80000" textLength="20.7" lengthAdjust="spacing">150</text>
<text class="m" x="1166.0" y="59.1" fill="#101010" textLength="13.8" lengthAdjust="spacing">);</text>
<text class="m" x="1055.6" y="70.1" fill="#101010" textLength="27.6" lengthAdjust="spacing">----</text>
<text class="m" x="1097.0" y="70.1" fill="#1010c8" textLength="34.5" lengthAdjust="spacing">while</text>
<text class="m" x="1138.4" y="70.1" fill="#101010" textLength="6.9" lengthAdjust="spacing">(</text>
<text class="m" x="1145.3" y="70.1" fill="#c80000" textLength="6.9" lengthAdjust="spacing">1</text>
<text class="m" x="1152.2" y="70.1" fill="#101010" textLength="6.9" lengthAdjust="spacing">)</text>
<text class="m" x="1055.6" y="81.1" fill="#101010" textLength="27.6" lengthAdjust="spacing">----</text>
<text class="m" x="1097.0" y="81.1" fill="#101010" textLength="6.9" lengthAdjust="spacing">{</text>
<rect x="1034" y="83.4" width="200" height="10.6" fill="#808080"/>
<path d="M1034.5 83.8l7 4.6l-7 4.6z" fill="#c00000"/>
<text class="m" x="1055.6" y="92.1" fill="#ffffff" textLength="27.6" lengthAdjust="spacing">0276</text>
<text class="m" x="1103.9" y="92.1" fill="#ffffff" textLength="117.3" lengthAdjust="spacing">while(status_rx_b</text>
<text class="m" x="1055.6" y="103.1" fill="#008484" textLength="27.6" lengthAdjust="spacing">027A</text>
<text class="m" x="1103.9" y="103.1" fill="#1010c8" textLength="41.4" lengthAdjust="spacing">switch</text>
<text class="m" x="1152.2" y="103.1" fill="#101010" textLength="69.0" lengthAdjust="spacing">(FUNCTION)</text>
<text class="m" x="1055.6" y="114.1" fill="#101010" textLength="27.6" lengthAdjust="spacing">----</text>
<text class="m" x="1103.9" y="114.1" fill="#101010" textLength="6.9" lengthAdjust="spacing">{</text>
<text class="m" x="1055.6" y="125.1" fill="#008484" textLength="27.6" lengthAdjust="spacing">0280</text>
<text class="m" x="1103.9" y="125.1" fill="#1010c8" textLength="27.6" lengthAdjust="spacing">case</text>
<text class="m" x="1138.4" y="125.1" fill="#101010" textLength="82.8" lengthAdjust="spacing">SYNCHRONIZAT</text>
<text class="m" x="1055.6" y="136.1" fill="#008484" textLength="27.6" lengthAdjust="spacing">0284</text>
<text class="m" x="1103.9" y="136.1" fill="#101010" textLength="62.1" lengthAdjust="spacing">rx_index=</text>
<text class="m" x="1166.0" y="136.1" fill="#c80000" textLength="6.9" lengthAdjust="spacing">0</text>
<text class="m" x="1172.9" y="136.1" fill="#101010" textLength="6.9" lengthAdjust="spacing">;</text>
<text class="m" x="1055.6" y="147.1" fill="#008484" textLength="27.6" lengthAdjust="spacing">0286</text>
<text class="m" x="1103.9" y="147.1" fill="#101010" textLength="117.3" lengthAdjust="spacing">status_rx_buffer=</text>
</g>
<defs>
<linearGradient id="wheelV" x1="0" y1="0" x2="0" y2="1"><stop offset="0" stop-color="#4c4c4c"/><stop offset="0.2" stop-color="#8e8e8e"/><stop offset="0.36" stop-color="#c6c6c6"/><stop offset="0.48" stop-color="#ffffff"/><stop offset="0.52" stop-color="#ffffff"/><stop offset="0.64" stop-color="#c6c6c6"/><stop offset="0.8" stop-color="#888888"/><stop offset="1" stop-color="#3a3a3a"/></linearGradient>
<linearGradient id="wheelH" x1="0" y1="0" x2="1" y2="0"><stop offset="0" stop-color="#3c3c3c"/><stop offset="0.2" stop-color="#8a8a8a"/><stop offset="0.36" stop-color="#c4c4c4"/><stop offset="0.48" stop-color="#ffffff"/><stop offset="0.52" stop-color="#ffffff"/><stop offset="0.64" stop-color="#c4c4c4"/><stop offset="0.8" stop-color="#8a8a8a"/><stop offset="1" stop-color="#3c3c3c"/></linearGradient>
<linearGradient id="knobO" x1="0.15" y1="0.15" x2="0.85" y2="0.85"><stop offset="0" stop-color="#dedede"/><stop offset="0.3" stop-color="#c8c8c8"/><stop offset="0.58" stop-color="#b4b4b4"/><stop offset="0.82" stop-color="#989898"/><stop offset="1" stop-color="#626262"/></linearGradient>
<linearGradient id="knobI" x1="0.12" y1="0.12" x2="0.88" y2="0.88"><stop offset="0" stop-color="#8c8c8c"/><stop offset="0.2" stop-color="#b4b4b4"/><stop offset="0.36" stop-color="#ffffff"/><stop offset="0.48" stop-color="#b0b0b0"/><stop offset="0.58" stop-color="#f2f2f2"/><stop offset="0.7" stop-color="#a8a8a8"/><stop offset="1" stop-color="#6c6c6c"/></linearGradient>
<linearGradient id="knobRim" x1="0.15" y1="0.15" x2="0.85" y2="0.85"><stop offset="0" stop-color="#c8c8c8"/><stop offset="0.5" stop-color="#8a8a8a"/><stop offset="1" stop-color="#2a2a2a"/></linearGradient>
<linearGradient id="knobS" x1="0.15" y1="0.15" x2="0.85" y2="0.85"><stop offset="0" stop-color="#c4c4c4"/><stop offset="0.5" stop-color="#a0a0a0"/><stop offset="1" stop-color="#6a6a6a"/></linearGradient>
<linearGradient id="knobR" x1="0.15" y1="0.15" x2="0.85" y2="0.85"><stop offset="0" stop-color="#9a9a9a"/><stop offset="1" stop-color="#3a3a3a"/></linearGradient>
<radialGradient id="btnD" cx="0.3" cy="0.3" r="0.9"><stop offset="0" stop-color="#a8a8a8"/><stop offset="0.5" stop-color="#6e6e6e"/><stop offset="1" stop-color="#3c3c3c"/></radialGradient>
<radialGradient id="btnP" cx="0.3" cy="0.3" r="0.9"><stop offset="0" stop-color="#ffffff"/><stop offset="0.5" stop-color="#ffc8cc"/><stop offset="1" stop-color="#f09aa0"/></radialGradient>
</defs>
<rect x="3" y="108" width="705" height="1" fill="#8e979d"/><rect x="3" y="108" width="1" height="458" fill="#8e979d"/>
<rect x="707" y="108" width="1" height="458" fill="#4c5a62"/><rect x="3" y="565" width="705" height="1" fill="#4c5a62"/>
<rect x="4.5" y="109.5" width="702" height="455" fill="none" stroke="#ffffff" stroke-opacity="0.9" stroke-width="1"/>
<rect x="8.5" y="131.5" width="693" height="428" fill="none" stroke="#ffffff" stroke-opacity="0.5" stroke-width="1"/>
<text x="11.6" y="124.6" font-size="12" fill="#000000">Digital Oscilloscope</text>
<rect x="685.5" y="113.5" width="16" height="16" rx="2.5" fill="#ffffff" fill-opacity="0.12" stroke="#56656c" stroke-width="1"/>
<rect x="686.5" y="114.5" width="14" height="14" rx="1.8" fill="none" stroke="#ffffff" stroke-opacity="0.8" stroke-width="1"/>
<path d="M691.6 119.5l3.8 3.8m0 -3.8l-3.8 3.8" stroke="#3c3c58" stroke-width="3.3" stroke-linecap="square"/>
<path d="M691.6 119.5l3.8 3.8m0 -3.8l-3.8 3.8" stroke="#ffffff" stroke-width="1.5" stroke-linecap="square"/>
<rect x="9" y="132" width="693" height="428" fill="#ffffff"/>
<rect x="9.5" y="132.5" width="692" height="427" fill="none" stroke="#484848" stroke-width="1"/>
<rect x="12" y="135" width="404" height="404" fill="#000000"/>
<path d="M14.5 137V538M14 137.5H415M34.5 137V538M14 157.5H415M54.5 137V538M14 177.5H415M74.5 137V538M14 197.5H415M94.5 137V538M14 217.5H415M114.5 137V538M14 237.5H415M134.5 137V538M14 257.5H415M154.5 137V538M14 277.5H415M174.5 137V538M14 297.5H415M194.5 137V538M14 317.5H415M214.5 137V538M14 337.5H415M234.5 137V538M14 357.5H415M254.5 137V538M14 377.5H415M274.5 137V538M14 397.5H415M294.5 137V538M14 417.5H415M314.5 137V538M14 437.5H415M334.5 137V538M14 457.5H415M354.5 137V538M14 477.5H415M374.5 137V538M14 497.5H415M394.5 137V538M14 517.5H415M414.5 137V538M14 537.5H415" stroke="#064806" stroke-width="1" fill="none" shape-rendering="crispEdges"/>
<path d="M214.5 137V538" stroke="#a2a2a2" stroke-width="1" stroke-dasharray="3 3" fill="none" shape-rendering="crispEdges"/>
<path d="M13 217.5H17.5V197.5V217.5H30.5V197.5V217.5H43.5V197.5H56.5V217.5H69.5V197.5V217.5H82.5V197.5V217.5H96.5V197.5H109.5V217.5H122.5V197.5V217.5H135.5V197.5V217.5H148.5V197.5H161.5V217.5H174.5V197.5V217.5H187.5V197.5V217.5H200.5V197.5H214.5V217.5H227.5V197.5V217.5H240.5V197.5V217.5H253.5V197.5H266.5V217.5H279.5V197.5V217.5H292.5V197.5V217.5H298.5" stroke="#fff20a" stroke-width="1" fill="none" shape-rendering="crispEdges"/>
<path d="M13 297.5H17.5V277.5H30.5V297.5H122.5V277.5H135.5V297.5H227.5V277.5H240.5V297.5H298.5" stroke="#08c4f0" stroke-width="1" fill="none" shape-rendering="crispEdges"/>
<path d="M17.5 278V297M30.5 278V297M122.5 278V297M135.5 278V297M227.5 278V297M240.5 278V297" stroke="#0a88dc" stroke-width="1" fill="none" shape-rendering="crispEdges"/>
<rect x="13" y="377" width="285" height="1" fill="#e8507c"/>
<rect x="13" y="457" width="285" height="1" fill="#10d048"/>
<rect x="12" y="540" width="405" height="1" fill="#6a6a6a"/>
<rect x="12" y="541" width="405" height="16" fill="#f5f5f5"/>
<rect x="12" y="541" width="17" height="16" fill="#efefef"/><rect x="12" y="541" width="17" height="1" fill="#fff"/><rect x="12" y="541" width="1" height="16" fill="#fff"/><rect x="28" y="541" width="1" height="16" fill="#8c8c8c"/><rect x="12" y="556" width="17" height="1" fill="#8c8c8c"/>
<rect x="401" y="541" width="16" height="16" fill="#efefef"/><rect x="401" y="541" width="16" height="1" fill="#fff"/><rect x="401" y="541" width="1" height="16" fill="#fff"/><rect x="416" y="541" width="1" height="16" fill="#8c8c8c"/><rect x="401" y="556" width="16" height="1" fill="#8c8c8c"/>
<rect x="156" y="541" width="126" height="16" fill="#efefef"/><rect x="156" y="541" width="126" height="1" fill="#fff"/><rect x="156" y="541" width="1" height="16" fill="#fff"/><rect x="281" y="541" width="1" height="16" fill="#8c8c8c"/><rect x="156" y="556" width="126" height="1" fill="#8c8c8c"/>
<path d="M17.2 549l4.6 -4.6v9.2z" fill="#000"/><path d="M411.8 549l-4.6 -4.6v9.2z" fill="#000"/>
<rect x="12" y="557" width="405" height="1" fill="#101010"/>
<rect x="417" y="134" width="283" height="424" fill="#b0b0b0"/>
<rect x="417" y="134" width="1" height="424" fill="#000"/>
<rect x="513" y="134" width="92" height="1" fill="#f0f0f0"/><rect x="513" y="134" width="1" height="26" fill="#f0f0f0"/>
<rect x="605" y="134" width="1" height="27" fill="#000"/><rect x="512" y="160" width="94" height="1" fill="#000"/>
<rect x="513" y="161" width="92" height="1" fill="#f0f0f0"/><rect x="513" y="161" width="1" height="184" fill="#f0f0f0"/>
<rect x="605" y="161" width="1" height="185" fill="#000"/><rect x="512" y="345" width="94" height="1" fill="#000"/>
<text x="558.2" y="152.3" font-size="11.6" fill="#ffff00" text-anchor="middle" font-weight="bold">Channel A</text>
<text x="542.2" y="171.2" font-size="9" fill="#2c2c2c" text-anchor="middle">Position</text>
<rect x="524" y="174" width="39" height="79" fill="#b0b0b0"/>
<rect x="523.5" y="173.5" width="40" height="80" fill="none" stroke="#f4f4f4" stroke-width="1"/>
<rect x="524.5" y="174.5" width="38" height="78" fill="none" stroke="#000" stroke-width="1"/>
<rect x="531" y="176" width="25" height="75" fill="url(#wheelV)"/>
<rect x="530.6" y="176" width="1" height="75" fill="#e0e0e0" fill-opacity="0.7"/><rect x="555.4" y="176" width="1.2" height="75" fill="#101010"/>
<path d="M531.6 180.4h2.8M555.4 180.4h-2.8M531.6 184.4h2.8M555.4 184.4h-2.8M531.6 188.4h2.8M555.4 188.4h-2.8M531.6 192.4h5M555.4 192.4h-5M531.6 196.4h2.8M555.4 196.4h-2.8M531.6 200.4h2.8M555.4 200.4h-2.8M531.6 204.4h2.8M555.4 204.4h-2.8M531.6 208.4h2.8M555.4 208.4h-2.8M531.6 212.4h5M555.4 212.4h-5M531.6 216.4h2.8M555.4 216.4h-2.8M531.6 220.4h2.8M555.4 220.4h-2.8M531.6 224.4h2.8M555.4 224.4h-2.8M531.6 228.4h2.8M555.4 228.4h-2.8M531.6 232.4h5M555.4 232.4h-5M531.6 236.4h2.8M555.4 236.4h-2.8M531.6 240.4h2.8M555.4 240.4h-2.8M531.6 244.4h2.8M555.4 244.4h-2.8M531.6 248.4h2.8M555.4 248.4h-2.8" stroke="#303030" stroke-opacity="0.8" stroke-width="0.9" fill="none"/>
<text x="543.6" y="195.0" font-size="9" fill="#0c0c2c" text-anchor="middle">110</text>
<text x="543.6" y="215.0" font-size="9" fill="#0c0c2c" text-anchor="middle">120</text>
<text x="543.6" y="235.0" font-size="9" fill="#0c0c2c" text-anchor="middle">130</text>
<path d="M525.2 208.0l5.2 4.4l-5.2 4.4z" fill="#f80000"/><path d="M561.6 208.0l-5.2 4.4l5.2 4.4z" fill="#f80000"/>
<path d="M518.5 200.9l-3.55 7.2h2.8v7.899999999999983h-2.8l3.55 7.2l3.55 -7.2h-2.8v-7.899999999999983h2.8z" fill="#ffff00"/>
<text x="587.0" y="176.5" font-size="9" fill="#2c2c2c" text-anchor="end">AC</text>
<text x="587.0" y="190.6" font-size="9" fill="#2c2c2c" text-anchor="end">DC</text>
<text x="587.0" y="204.6" font-size="9" fill="#2c2c2c" text-anchor="end">GND</text>
<text x="587.0" y="218.7" font-size="9" fill="#2c2c2c" text-anchor="end">OFF</text>
<rect x="590" y="164" width="13" height="61" fill="#b0b0b0"/>
<rect x="589.5" y="163.5" width="14" height="62" fill="none" stroke="#f4f4f4" stroke-width="1"/>
<rect x="590.5" y="164.5" width="12" height="60" fill="none" stroke="#000" stroke-width="1"/>
<rect x="595.1" y="169" width="2.2" height="51" fill="#000"/><rect x="597.3" y="169" width="0.8" height="51" fill="#d8d8d8"/>
<rect x="591.5" y="180" width="10" height="14" fill="#d4d4d4"/>
<rect x="591.5" y="180" width="10" height="1" fill="#fff"/><rect x="591.5" y="180" width="1" height="14" fill="#fff"/>
<rect x="600.5" y="180" width="1" height="14" fill="#585858"/><rect x="591.5" y="193" width="10" height="1" fill="#585858"/>
<rect x="593.2" y="182.2" width="6.4" height="1" fill="#505050"/>
<rect x="593.2" y="185.2" width="6.4" height="1" fill="#505050"/>
<rect x="593.2" y="188.3" width="6.4" height="1" fill="#505050"/>
<rect x="593.2" y="191.3" width="6.4" height="1" fill="#505050"/>
<rect x="590" y="228" width="14" height="14" fill="url(#btnD)"/>
<rect x="590" y="228" width="14" height="1" fill="#f0f0f0"/><rect x="590" y="228" width="1" height="14" fill="#f0f0f0"/>
<rect x="603" y="228" width="1" height="14" fill="#202020"/><rect x="590" y="241" width="14" height="1" fill="#202020"/>
<text x="587.4" y="238.2" font-size="9" fill="#2c2c2c" text-anchor="end">Invert</text>
<rect x="590" y="244" width="14" height="14" fill="url(#btnD)"/>
<rect x="590" y="244" width="14" height="1" fill="#f0f0f0"/><rect x="590" y="244" width="1" height="14" fill="#f0f0f0"/>
<rect x="603" y="244" width="1" height="14" fill="#202020"/><rect x="590" y="257" width="14" height="1" fill="#202020"/>
<text x="587.4" y="254.4" font-size="9" fill="#2c2c2c" text-anchor="end">A+B</text>
<path d="M515.2 343.4V300.3A44.4 44.4 0 0 1 604.0 300.3V343.4Z" fill="#ffffff" stroke="#303030" stroke-width="1"/>
<path d="M574.8 276.8L584.3 261.1L581.7 259.5L572.2 275.3Z" fill="#b0b0b0"/>
<path d="M574.8 276.8L583.4 262.4M572.2 275.3L580.5 261.6" stroke="#303030" stroke-width="1" fill="none"/>
<rect x="540.2" y="299.2" width="38.6" height="45.2" fill="#b0b0b0"/>
<path d="M540.2 317.2V343.4M578.8 317.2V343.4" stroke="#303030" stroke-width="1"/>
<path d="M539.1 319.7L535.8 323.0" stroke="#303030" stroke-width="0.9"/>
<text x="529.5" y="329.3" font-size="7.2" fill="#303030" text-anchor="middle">20</text>
<path d="M532.8 310.3L528.6 312.1" stroke="#303030" stroke-width="0.9"/>
<text x="522.0" y="317.3" font-size="7.2" fill="#303030" text-anchor="middle">10</text>
<path d="M530.6 299.2L526.0 299.2" stroke="#303030" stroke-width="0.9"/>
<text x="520.3" y="302.1" font-size="7.2" fill="#303030" text-anchor="middle">5</text>
<path d="M532.8 288.1L528.6 286.3" stroke="#303030" stroke-width="0.9"/>
<text x="523.3" y="288.7" font-size="7.2" fill="#303030" text-anchor="middle">2</text>
<path d="M539.1 278.7L535.8 275.4" stroke="#303030" stroke-width="0.9"/>
<text x="531.4" y="275.3" font-size="7.2" fill="#303030" text-anchor="middle">1</text>
<path d="M548.5 272.4L546.7 268.2" stroke="#303030" stroke-width="0.9"/>
<text x="544.8" y="266.2" font-size="7.2" fill="#303030" text-anchor="middle">0.5</text>
<path d="M559.6 270.2L559.6 265.6" stroke="#303030" stroke-width="0.9"/>
<text x="560.0" y="263.4" font-size="7.2" fill="#303030" text-anchor="middle">0.2</text>
<path d="M570.7 272.4L572.5 268.2" stroke="#303030" stroke-width="0.9"/>
<text x="573.4" y="266.4" font-size="7.2" fill="#303030" text-anchor="middle">0.1</text>
<path d="M580.1 278.7L583.4 275.4" stroke="#303030" stroke-width="0.9"/>
<text x="587.5" y="275.3" font-size="7.2" fill="#303030" text-anchor="middle">50</text>
<path d="M586.4 288.1L590.6 286.3" stroke="#303030" stroke-width="0.9"/>
<text x="595.6" y="288.7" font-size="7.2" fill="#303030" text-anchor="middle">20</text>
<path d="M588.6 299.2L593.2 299.2" stroke="#303030" stroke-width="0.9"/>
<text x="598.2" y="302.1" font-size="7.2" fill="#303030" text-anchor="middle">10</text>
<path d="M586.4 310.3L590.6 312.1" stroke="#303030" stroke-width="0.9"/>
<text x="595.0" y="317.3" font-size="7.2" fill="#303030" text-anchor="middle">5</text>
<path d="M580.1 319.7L583.4 323.0" stroke="#303030" stroke-width="0.9"/>
<text x="586.4" y="329.3" font-size="7.2" fill="#303030" text-anchor="middle">2</text>
<text x="527.6" y="338.8" font-size="9" fill="#303030" text-anchor="middle">V</text>
<text x="592.4" y="338.8" font-size="9" fill="#303030" text-anchor="middle">mV</text>
<circle cx="560.5" cy="300.3" r="29.8" fill="#303030" fill-opacity="0.5"/>
<circle cx="559.6" cy="299.0" r="29.2" fill="url(#knobO)"/>
<circle cx="559.6" cy="299.0" r="28.7" fill="none" stroke="url(#knobRim)" stroke-width="1.2"/>
<circle cx="559.6" cy="299.2" r="17.4" fill="url(#knobS)"/>
<circle cx="559.9" cy="299.6" r="15.6" fill="url(#knobR)"/>
<circle cx="559.6" cy="299.2" r="14.2" fill="url(#knobI)"/>
<path d="M532.0 299.2L540.4 294.3L540.4 304.1Z" fill="#ffff00"/>
<path d="M563.0 307.1L566.5 303.1L569.0 309.2Z" fill="#ffff00"/>
<rect x="542" y="330.5" width="35" height="13" fill="#ffffff"/>
<rect x="542" y="330" width="35.6" height="1.4" fill="#202020"/><rect x="542" y="330" width="1.4" height="13.4" fill="#202020"/>
<text x="544.6" y="338.8" font-size="9" fill="#2828a8" text-anchor="start">5</text>
<rect x="607" y="134" width="92" height="1" fill="#f0f0f0"/><rect x="607" y="134" width="1" height="26" fill="#f0f0f0"/>
<rect x="699" y="134" width="1" height="27" fill="#000"/><rect x="606" y="160" width="94" height="1" fill="#000"/>
<rect x="607" y="161" width="92" height="1" fill="#f0f0f0"/><rect x="607" y="161" width="1" height="184" fill="#f0f0f0"/>
<rect x="699" y="161" width="1" height="185" fill="#000"/><rect x="606" y="345" width="94" height="1" fill="#000"/>
<text x="652.2" y="152.3" font-size="11.6" fill="#e8108c" text-anchor="middle" font-weight="bold">Channel C</text>
<text x="636.2" y="171.2" font-size="9" fill="#2c2c2c" text-anchor="middle">Position</text>
<rect x="618" y="174" width="39" height="79" fill="#b0b0b0"/>
<rect x="617.5" y="173.5" width="40" height="80" fill="none" stroke="#f4f4f4" stroke-width="1"/>
<rect x="618.5" y="174.5" width="38" height="78" fill="none" stroke="#000" stroke-width="1"/>
<rect x="625" y="176" width="25" height="75" fill="url(#wheelV)"/>
<rect x="624.6" y="176" width="1" height="75" fill="#e0e0e0" fill-opacity="0.7"/><rect x="649.4" y="176" width="1.2" height="75" fill="#101010"/>
<path d="M625.6 180.4h2.8M649.4 180.4h-2.8M625.6 184.4h2.8M649.4 184.4h-2.8M625.6 188.4h2.8M649.4 188.4h-2.8M625.6 192.4h5M649.4 192.4h-5M625.6 196.4h2.8M649.4 196.4h-2.8M625.6 200.4h2.8M649.4 200.4h-2.8M625.6 204.4h2.8M649.4 204.4h-2.8M625.6 208.4h2.8M649.4 208.4h-2.8M625.6 212.4h5M649.4 212.4h-5M625.6 216.4h2.8M649.4 216.4h-2.8M625.6 220.4h2.8M649.4 220.4h-2.8M625.6 224.4h2.8M649.4 224.4h-2.8M625.6 228.4h2.8M649.4 228.4h-2.8M625.6 232.4h5M649.4 232.4h-5M625.6 236.4h2.8M649.4 236.4h-2.8M625.6 240.4h2.8M649.4 240.4h-2.8M625.6 244.4h2.8M649.4 244.4h-2.8M625.6 248.4h2.8M649.4 248.4h-2.8" stroke="#303030" stroke-opacity="0.8" stroke-width="0.9" fill="none"/>
<text x="637.6" y="195.0" font-size="9" fill="#0c0c2c" text-anchor="middle">-50</text>
<text x="637.6" y="215.0" font-size="9" fill="#0c0c2c" text-anchor="middle">-40</text>
<text x="637.6" y="235.0" font-size="9" fill="#0c0c2c" text-anchor="middle">-30</text>
<path d="M619.2 208.0l5.2 4.4l-5.2 4.4z" fill="#f80000"/><path d="M655.6 208.0l-5.2 4.4l5.2 4.4z" fill="#f80000"/>
<path d="M612.5 200.9l-3.55 7.2h2.8v7.899999999999983h-2.8l3.55 7.2l3.55 -7.2h-2.8v-7.899999999999983h2.8z" fill="#e8108c"/>
<text x="681.0" y="176.5" font-size="9" fill="#2c2c2c" text-anchor="end">AC</text>
<text x="681.0" y="190.6" font-size="9" fill="#2c2c2c" text-anchor="end">DC</text>
<text x="681.0" y="204.6" font-size="9" fill="#2c2c2c" text-anchor="end">GND</text>
<text x="681.0" y="218.7" font-size="9" fill="#2c2c2c" text-anchor="end">OFF</text>
<rect x="684" y="164" width="13" height="61" fill="#b0b0b0"/>
<rect x="683.5" y="163.5" width="14" height="62" fill="none" stroke="#f4f4f4" stroke-width="1"/>
<rect x="684.5" y="164.5" width="12" height="60" fill="none" stroke="#000" stroke-width="1"/>
<rect x="689.1" y="169" width="2.2" height="51" fill="#000"/><rect x="691.3" y="169" width="0.8" height="51" fill="#d8d8d8"/>
<rect x="685.5" y="165" width="10" height="14" fill="#d4d4d4"/>
<rect x="685.5" y="165" width="10" height="1" fill="#fff"/><rect x="685.5" y="165" width="1" height="14" fill="#fff"/>
<rect x="694.5" y="165" width="1" height="14" fill="#585858"/><rect x="685.5" y="178" width="10" height="1" fill="#585858"/>
<rect x="687.2" y="167.2" width="6.4" height="1" fill="#505050"/>
<rect x="687.2" y="170.2" width="6.4" height="1" fill="#505050"/>
<rect x="687.2" y="173.3" width="6.4" height="1" fill="#505050"/>
<rect x="687.2" y="176.3" width="6.4" height="1" fill="#505050"/>
<rect x="684" y="228" width="14" height="14" fill="url(#btnD)"/>
<rect x="684" y="228" width="14" height="1" fill="#f0f0f0"/><rect x="684" y="228" width="1" height="14" fill="#f0f0f0"/>
<rect x="697" y="228" width="1" height="14" fill="#202020"/><rect x="684" y="241" width="14" height="1" fill="#202020"/>
<text x="681.4" y="238.2" font-size="9" fill="#2c2c2c" text-anchor="end">Invert</text>
<rect x="684" y="244" width="14" height="14" fill="url(#btnD)"/>
<rect x="684" y="244" width="14" height="1" fill="#f0f0f0"/><rect x="684" y="244" width="1" height="14" fill="#f0f0f0"/>
<rect x="697" y="244" width="1" height="14" fill="#202020"/><rect x="684" y="257" width="14" height="1" fill="#202020"/>
<text x="681.4" y="254.4" font-size="9" fill="#2c2c2c" text-anchor="end">C+D</text>
<path d="M609.2 343.4V300.3A44.4 44.4 0 0 1 698.0 300.3V343.4Z" fill="#ffffff" stroke="#303030" stroke-width="1"/>
<path d="M668.8 276.8L678.3 261.1L675.7 259.5L666.2 275.3Z" fill="#b0b0b0"/>
<path d="M668.8 276.8L677.4 262.4M666.2 275.3L674.5 261.6" stroke="#303030" stroke-width="1" fill="none"/>
<rect x="634.2" y="299.2" width="38.6" height="45.2" fill="#b0b0b0"/>
<path d="M634.2 317.2V343.4M672.8 317.2V343.4" stroke="#303030" stroke-width="1"/>
<path d="M633.1 319.7L629.8 323.0" stroke="#303030" stroke-width="0.9"/>
<text x="623.5" y="329.3" font-size="7.2" fill="#303030" text-anchor="middle">20</text>
<path d="M626.8 310.3L622.6 312.1" stroke="#303030" stroke-width="0.9"/>
<text x="616.0" y="317.3" font-size="7.2" fill="#303030" text-anchor="middle">10</text>
<path d="M624.6 299.2L620.0 299.2" stroke="#303030" stroke-width="0.9"/>
<text x="614.3" y="302.1" font-size="7.2" fill="#303030" text-anchor="middle">5</text>
<path d="M626.8 288.1L622.6 286.3" stroke="#303030" stroke-width="0.9"/>
<text x="617.3" y="288.7" font-size="7.2" fill="#303030" text-anchor="middle">2</text>
<path d="M633.1 278.7L629.8 275.4" stroke="#303030" stroke-width="0.9"/>
<text x="625.4" y="275.3" font-size="7.2" fill="#303030" text-anchor="middle">1</text>
<path d="M642.5 272.4L640.7 268.2" stroke="#303030" stroke-width="0.9"/>
<text x="638.8" y="266.2" font-size="7.2" fill="#303030" text-anchor="middle">0.5</text>
<path d="M653.6 270.2L653.6 265.6" stroke="#303030" stroke-width="0.9"/>
<text x="654.0" y="263.4" font-size="7.2" fill="#303030" text-anchor="middle">0.2</text>
<path d="M664.7 272.4L666.5 268.2" stroke="#303030" stroke-width="0.9"/>
<text x="667.4" y="266.4" font-size="7.2" fill="#303030" text-anchor="middle">0.1</text>
<path d="M674.1 278.7L677.4 275.4" stroke="#303030" stroke-width="0.9"/>
<text x="681.5" y="275.3" font-size="7.2" fill="#303030" text-anchor="middle">50</text>
<path d="M680.4 288.1L684.6 286.3" stroke="#303030" stroke-width="0.9"/>
<text x="689.6" y="288.7" font-size="7.2" fill="#303030" text-anchor="middle">20</text>
<path d="M682.6 299.2L687.2 299.2" stroke="#303030" stroke-width="0.9"/>
<text x="692.2" y="302.1" font-size="7.2" fill="#303030" text-anchor="middle">10</text>
<path d="M680.4 310.3L684.6 312.1" stroke="#303030" stroke-width="0.9"/>
<text x="689.0" y="317.3" font-size="7.2" fill="#303030" text-anchor="middle">5</text>
<path d="M674.1 319.7L677.4 323.0" stroke="#303030" stroke-width="0.9"/>
<text x="680.4" y="329.3" font-size="7.2" fill="#303030" text-anchor="middle">2</text>
<text x="621.6" y="338.8" font-size="9" fill="#303030" text-anchor="middle">V</text>
<text x="686.4" y="338.8" font-size="9" fill="#303030" text-anchor="middle">mV</text>
<circle cx="654.5" cy="300.3" r="29.8" fill="#303030" fill-opacity="0.5"/>
<circle cx="653.6" cy="299.0" r="29.2" fill="url(#knobO)"/>
<circle cx="653.6" cy="299.0" r="28.7" fill="none" stroke="url(#knobRim)" stroke-width="1.2"/>
<circle cx="653.6" cy="299.2" r="17.4" fill="url(#knobS)"/>
<circle cx="653.9" cy="299.6" r="15.6" fill="url(#knobR)"/>
<circle cx="653.6" cy="299.2" r="14.2" fill="url(#knobI)"/>
<path d="M626.0 299.2L634.4 294.3L634.4 304.1Z" fill="#e8108c"/>
<path d="M657.0 307.1L660.5 303.1L663.0 309.2Z" fill="#e8108c"/>
<rect x="636" y="330.5" width="35" height="13" fill="#ffffff"/>
<rect x="636" y="330" width="35.6" height="1.4" fill="#202020"/><rect x="636" y="330" width="1.4" height="13.4" fill="#202020"/>
<text x="638.6" y="338.8" font-size="9" fill="#2828a8" text-anchor="start">5</text>
<rect x="513" y="346" width="92" height="1" fill="#f0f0f0"/><rect x="513" y="346" width="1" height="26" fill="#f0f0f0"/>
<rect x="605" y="346" width="1" height="27" fill="#000"/><rect x="512" y="372" width="94" height="1" fill="#000"/>
<rect x="513" y="373" width="92" height="1" fill="#f0f0f0"/><rect x="513" y="373" width="1" height="184" fill="#f0f0f0"/>
<rect x="605" y="373" width="1" height="185" fill="#000"/><rect x="512" y="557" width="94" height="1" fill="#000"/>
<text x="558.2" y="364.3" font-size="11.6" fill="#189cf0" text-anchor="middle" font-weight="bold">Channel B</text>
<text x="542.2" y="383.2" font-size="9" fill="#2c2c2c" text-anchor="middle">Position</text>
<rect x="524" y="386" width="39" height="79" fill="#b0b0b0"/>
<rect x="523.5" y="385.5" width="40" height="80" fill="none" stroke="#f4f4f4" stroke-width="1"/>
<rect x="524.5" y="386.5" width="38" height="78" fill="none" stroke="#000" stroke-width="1"/>
<rect x="531" y="388" width="25" height="75" fill="url(#wheelV)"/>
<rect x="530.6" y="388" width="1" height="75" fill="#e0e0e0" fill-opacity="0.7"/><rect x="555.4" y="388" width="1.2" height="75" fill="#101010"/>
<path d="M531.6 392.4h2.8M555.4 392.4h-2.8M531.6 396.4h2.8M555.4 396.4h-2.8M531.6 400.4h2.8M555.4 400.4h-2.8M531.6 404.4h5M555.4 404.4h-5M531.6 408.4h2.8M555.4 408.4h-2.8M531.6 412.4h2.8M555.4 412.4h-2.8M531.6 416.4h2.8M555.4 416.4h-2.8M531.6 420.4h2.8M555.4 420.4h-2.8M531.6 424.4h5M555.4 424.4h-5M531.6 428.4h2.8M555.4 428.4h-2.8M531.6 432.4h2.8M555.4 432.4h-2.8M531.6 436.4h2.8M555.4 436.4h-2.8M531.6 440.4h2.8M555.4 440.4h-2.8M531.6 444.4h5M555.4 444.4h-5M531.6 448.4h2.8M555.4 448.4h-2.8M531.6 452.4h2.8M555.4 452.4h-2.8M531.6 456.4h2.8M555.4 456.4h-2.8M531.6 460.4h2.8M555.4 460.4h-2.8" stroke="#303030" stroke-opacity="0.8" stroke-width="0.9" fill="none"/>
<text x="543.6" y="407.0" font-size="9" fill="#0c0c2c" text-anchor="middle">30</text>
<text x="543.6" y="427.0" font-size="9" fill="#0c0c2c" text-anchor="middle">40</text>
<text x="543.6" y="447.0" font-size="9" fill="#0c0c2c" text-anchor="middle">50</text>
<path d="M525.2 420.0l5.2 4.4l-5.2 4.4z" fill="#f80000"/><path d="M561.6 420.0l-5.2 4.4l5.2 4.4z" fill="#f80000"/>
<path d="M518.5 412.9l-3.55 7.2h2.8v7.900000000000011h-2.8l3.55 7.2l3.55 -7.2h-2.8v-7.900000000000011h2.8z" fill="#189cf0"/>
<text x="587.0" y="388.5" font-size="9" fill="#2c2c2c" text-anchor="end">AC</text>
<text x="587.0" y="402.6" font-size="9" fill="#2c2c2c" text-anchor="end">DC</text>
<text x="587.0" y="416.6" font-size="9" fill="#2c2c2c" text-anchor="end">GND</text>
<text x="587.0" y="430.6" font-size="9" fill="#2c2c2c" text-anchor="end">OFF</text>
<rect x="590" y="376" width="13" height="61" fill="#b0b0b0"/>
<rect x="589.5" y="375.5" width="14" height="62" fill="none" stroke="#f4f4f4" stroke-width="1"/>
<rect x="590.5" y="376.5" width="12" height="60" fill="none" stroke="#000" stroke-width="1"/>
<rect x="595.1" y="381" width="2.2" height="51" fill="#000"/><rect x="597.3" y="381" width="0.8" height="51" fill="#d8d8d8"/>
<rect x="591.5" y="392" width="10" height="14" fill="#d4d4d4"/>
<rect x="591.5" y="392" width="10" height="1" fill="#fff"/><rect x="591.5" y="392" width="1" height="14" fill="#fff"/>
<rect x="600.5" y="392" width="1" height="14" fill="#585858"/><rect x="591.5" y="405" width="10" height="1" fill="#585858"/>
<rect x="593.2" y="394.2" width="6.4" height="1" fill="#505050"/>
<rect x="593.2" y="397.2" width="6.4" height="1" fill="#505050"/>
<rect x="593.2" y="400.3" width="6.4" height="1" fill="#505050"/>
<rect x="593.2" y="403.3" width="6.4" height="1" fill="#505050"/>
<rect x="590" y="440" width="14" height="14" fill="url(#btnD)"/>
<rect x="590" y="440" width="14" height="1" fill="#f0f0f0"/><rect x="590" y="440" width="1" height="14" fill="#f0f0f0"/>
<rect x="603" y="440" width="1" height="14" fill="#202020"/><rect x="590" y="453" width="14" height="1" fill="#202020"/>
<text x="587.4" y="450.2" font-size="9" fill="#2c2c2c" text-anchor="end">Invert</text>
<path d="M515.2 555.4V512.3A44.4 44.4 0 0 1 604.0 512.3V555.4Z" fill="#ffffff" stroke="#303030" stroke-width="1"/>
<path d="M574.8 488.8L584.3 473.1L581.7 471.5L572.2 487.3Z" fill="#b0b0b0"/>
<path d="M574.8 488.8L583.4 474.4M572.2 487.3L580.5 473.6" stroke="#303030" stroke-width="1" fill="none"/>
<rect x="540.2" y="511.2" width="38.6" height="45.2" fill="#b0b0b0"/>
<path d="M540.2 529.2V555.4M578.8 529.2V555.4" stroke="#303030" stroke-width="1"/>
<path d="M539.1 531.7L535.8 535.0" stroke="#303030" stroke-width="0.9"/>
<text x="529.5" y="541.3" font-size="7.2" fill="#303030" text-anchor="middle">20</text>
<path d="M532.8 522.3L528.6 524.1" stroke="#303030" stroke-width="0.9"/>
<text x="522.0" y="529.3" font-size="7.2" fill="#303030" text-anchor="middle">10</text>
<path d="M530.6 511.2L526.0 511.2" stroke="#303030" stroke-width="0.9"/>
<text x="520.3" y="514.1" font-size="7.2" fill="#303030" text-anchor="middle">5</text>
<path d="M532.8 500.1L528.6 498.3" stroke="#303030" stroke-width="0.9"/>
<text x="523.3" y="500.7" font-size="7.2" fill="#303030" text-anchor="middle">2</text>
<path d="M539.1 490.7L535.8 487.4" stroke="#303030" stroke-width="0.9"/>
<text x="531.4" y="487.3" font-size="7.2" fill="#303030" text-anchor="middle">1</text>
<path d="M548.5 484.4L546.7 480.2" stroke="#303030" stroke-width="0.9"/>
<text x="544.8" y="478.2" font-size="7.2" fill="#303030" text-anchor="middle">0.5</text>
<path d="M559.6 482.2L559.6 477.6" stroke="#303030" stroke-width="0.9"/>
<text x="560.0" y="475.4" font-size="7.2" fill="#303030" text-anchor="middle">0.2</text>
<path d="M570.7 484.4L572.5 480.2" stroke="#303030" stroke-width="0.9"/>
<text x="573.4" y="478.4" font-size="7.2" fill="#303030" text-anchor="middle">0.1</text>
<path d="M580.1 490.7L583.4 487.4" stroke="#303030" stroke-width="0.9"/>
<text x="587.5" y="487.3" font-size="7.2" fill="#303030" text-anchor="middle">50</text>
<path d="M586.4 500.1L590.6 498.3" stroke="#303030" stroke-width="0.9"/>
<text x="595.6" y="500.7" font-size="7.2" fill="#303030" text-anchor="middle">20</text>
<path d="M588.6 511.2L593.2 511.2" stroke="#303030" stroke-width="0.9"/>
<text x="598.2" y="514.1" font-size="7.2" fill="#303030" text-anchor="middle">10</text>
<path d="M586.4 522.3L590.6 524.1" stroke="#303030" stroke-width="0.9"/>
<text x="595.0" y="529.3" font-size="7.2" fill="#303030" text-anchor="middle">5</text>
<path d="M580.1 531.7L583.4 535.0" stroke="#303030" stroke-width="0.9"/>
<text x="586.4" y="541.3" font-size="7.2" fill="#303030" text-anchor="middle">2</text>
<text x="527.6" y="550.8" font-size="9" fill="#303030" text-anchor="middle">V</text>
<text x="592.4" y="550.8" font-size="9" fill="#303030" text-anchor="middle">mV</text>
<circle cx="560.5" cy="512.3" r="29.8" fill="#303030" fill-opacity="0.5"/>
<circle cx="559.6" cy="511.0" r="29.2" fill="url(#knobO)"/>
<circle cx="559.6" cy="511.0" r="28.7" fill="none" stroke="url(#knobRim)" stroke-width="1.2"/>
<circle cx="559.6" cy="511.2" r="17.4" fill="url(#knobS)"/>
<circle cx="559.9" cy="511.6" r="15.6" fill="url(#knobR)"/>
<circle cx="559.6" cy="511.2" r="14.2" fill="url(#knobI)"/>
<path d="M532.0 511.2L540.4 506.3L540.4 516.1Z" fill="#189cf0"/>
<path d="M563.0 519.1L566.5 515.1L569.0 521.2Z" fill="#189cf0"/>
<rect x="542" y="542.5" width="35" height="13" fill="#ffffff"/>
<rect x="542" y="542" width="35.6" height="1.4" fill="#202020"/><rect x="542" y="542" width="1.4" height="13.4" fill="#202020"/>
<text x="544.6" y="550.8" font-size="9" fill="#2828a8" text-anchor="start">5</text>
<rect x="607" y="346" width="92" height="1" fill="#f0f0f0"/><rect x="607" y="346" width="1" height="26" fill="#f0f0f0"/>
<rect x="699" y="346" width="1" height="27" fill="#000"/><rect x="606" y="372" width="94" height="1" fill="#000"/>
<rect x="607" y="373" width="92" height="1" fill="#f0f0f0"/><rect x="607" y="373" width="1" height="184" fill="#f0f0f0"/>
<rect x="699" y="373" width="1" height="185" fill="#000"/><rect x="606" y="557" width="94" height="1" fill="#000"/>
<text x="652.2" y="364.3" font-size="11.6" fill="#10a050" text-anchor="middle" font-weight="bold">Channel D</text>
<text x="636.2" y="383.2" font-size="9" fill="#2c2c2c" text-anchor="middle">Position</text>
<rect x="618" y="386" width="39" height="79" fill="#b0b0b0"/>
<rect x="617.5" y="385.5" width="40" height="80" fill="none" stroke="#f4f4f4" stroke-width="1"/>
<rect x="618.5" y="386.5" width="38" height="78" fill="none" stroke="#000" stroke-width="1"/>
<rect x="625" y="388" width="25" height="75" fill="url(#wheelV)"/>
<rect x="624.6" y="388" width="1" height="75" fill="#e0e0e0" fill-opacity="0.7"/><rect x="649.4" y="388" width="1.2" height="75" fill="#101010"/>
<path d="M625.6 392.4h2.8M649.4 392.4h-2.8M625.6 396.4h2.8M649.4 396.4h-2.8M625.6 400.4h2.8M649.4 400.4h-2.8M625.6 404.4h5M649.4 404.4h-5M625.6 408.4h2.8M649.4 408.4h-2.8M625.6 412.4h2.8M649.4 412.4h-2.8M625.6 416.4h2.8M649.4 416.4h-2.8M625.6 420.4h2.8M649.4 420.4h-2.8M625.6 424.4h5M649.4 424.4h-5M625.6 428.4h2.8M649.4 428.4h-2.8M625.6 432.4h2.8M649.4 432.4h-2.8M625.6 436.4h2.8M649.4 436.4h-2.8M625.6 440.4h2.8M649.4 440.4h-2.8M625.6 444.4h5M649.4 444.4h-5M625.6 448.4h2.8M649.4 448.4h-2.8M625.6 452.4h2.8M649.4 452.4h-2.8M625.6 456.4h2.8M649.4 456.4h-2.8M625.6 460.4h2.8M649.4 460.4h-2.8" stroke="#303030" stroke-opacity="0.8" stroke-width="0.9" fill="none"/>
<text x="637.6" y="407.0" font-size="9" fill="#0c0c2c" text-anchor="middle">-130</text>
<text x="637.6" y="427.0" font-size="9" fill="#0c0c2c" text-anchor="middle">-120</text>
<text x="637.6" y="447.0" font-size="9" fill="#0c0c2c" text-anchor="middle">-110</text>
<path d="M619.2 420.0l5.2 4.4l-5.2 4.4z" fill="#f80000"/><path d="M655.6 420.0l-5.2 4.4l5.2 4.4z" fill="#f80000"/>
<path d="M612.5 412.9l-3.55 7.2h2.8v7.900000000000011h-2.8l3.55 7.2l3.55 -7.2h-2.8v-7.900000000000011h2.8z" fill="#10a050"/>
<text x="681.0" y="388.5" font-size="9" fill="#2c2c2c" text-anchor="end">AC</text>
<text x="681.0" y="402.6" font-size="9" fill="#2c2c2c" text-anchor="end">DC</text>
<text x="681.0" y="416.6" font-size="9" fill="#2c2c2c" text-anchor="end">GND</text>
<text x="681.0" y="430.6" font-size="9" fill="#2c2c2c" text-anchor="end">OFF</text>
<rect x="684" y="376" width="13" height="61" fill="#b0b0b0"/>
<rect x="683.5" y="375.5" width="14" height="62" fill="none" stroke="#f4f4f4" stroke-width="1"/>
<rect x="684.5" y="376.5" width="12" height="60" fill="none" stroke="#000" stroke-width="1"/>
<rect x="689.1" y="381" width="2.2" height="51" fill="#000"/><rect x="691.3" y="381" width="0.8" height="51" fill="#d8d8d8"/>
<rect x="685.5" y="377" width="10" height="14" fill="#d4d4d4"/>
<rect x="685.5" y="377" width="10" height="1" fill="#fff"/><rect x="685.5" y="377" width="1" height="14" fill="#fff"/>
<rect x="694.5" y="377" width="1" height="14" fill="#585858"/><rect x="685.5" y="390" width="10" height="1" fill="#585858"/>
<rect x="687.2" y="379.2" width="6.4" height="1" fill="#505050"/>
<rect x="687.2" y="382.2" width="6.4" height="1" fill="#505050"/>
<rect x="687.2" y="385.3" width="6.4" height="1" fill="#505050"/>
<rect x="687.2" y="388.3" width="6.4" height="1" fill="#505050"/>
<rect x="684" y="440" width="14" height="14" fill="url(#btnD)"/>
<rect x="684" y="440" width="14" height="1" fill="#f0f0f0"/><rect x="684" y="440" width="1" height="14" fill="#f0f0f0"/>
<rect x="697" y="440" width="1" height="14" fill="#202020"/><rect x="684" y="453" width="14" height="1" fill="#202020"/>
<text x="681.4" y="450.2" font-size="9" fill="#2c2c2c" text-anchor="end">Invert</text>
<path d="M609.2 555.4V512.3A44.4 44.4 0 0 1 698.0 512.3V555.4Z" fill="#ffffff" stroke="#303030" stroke-width="1"/>
<path d="M668.8 488.8L678.3 473.1L675.7 471.5L666.2 487.3Z" fill="#b0b0b0"/>
<path d="M668.8 488.8L677.4 474.4M666.2 487.3L674.5 473.6" stroke="#303030" stroke-width="1" fill="none"/>
<rect x="634.2" y="511.2" width="38.6" height="45.2" fill="#b0b0b0"/>
<path d="M634.2 529.2V555.4M672.8 529.2V555.4" stroke="#303030" stroke-width="1"/>
<path d="M633.1 531.7L629.8 535.0" stroke="#303030" stroke-width="0.9"/>
<text x="623.5" y="541.3" font-size="7.2" fill="#303030" text-anchor="middle">20</text>
<path d="M626.8 522.3L622.6 524.1" stroke="#303030" stroke-width="0.9"/>
<text x="616.0" y="529.3" font-size="7.2" fill="#303030" text-anchor="middle">10</text>
<path d="M624.6 511.2L620.0 511.2" stroke="#303030" stroke-width="0.9"/>
<text x="614.3" y="514.1" font-size="7.2" fill="#303030" text-anchor="middle">5</text>
<path d="M626.8 500.1L622.6 498.3" stroke="#303030" stroke-width="0.9"/>
<text x="617.3" y="500.7" font-size="7.2" fill="#303030" text-anchor="middle">2</text>
<path d="M633.1 490.7L629.8 487.4" stroke="#303030" stroke-width="0.9"/>
<text x="625.4" y="487.3" font-size="7.2" fill="#303030" text-anchor="middle">1</text>
<path d="M642.5 484.4L640.7 480.2" stroke="#303030" stroke-width="0.9"/>
<text x="638.8" y="478.2" font-size="7.2" fill="#303030" text-anchor="middle">0.5</text>
<path d="M653.6 482.2L653.6 477.6" stroke="#303030" stroke-width="0.9"/>
<text x="654.0" y="475.4" font-size="7.2" fill="#303030" text-anchor="middle">0.2</text>
<path d="M664.7 484.4L666.5 480.2" stroke="#303030" stroke-width="0.9"/>
<text x="667.4" y="478.4" font-size="7.2" fill="#303030" text-anchor="middle">0.1</text>
<path d="M674.1 490.7L677.4 487.4" stroke="#303030" stroke-width="0.9"/>
<text x="681.5" y="487.3" font-size="7.2" fill="#303030" text-anchor="middle">50</text>
<path d="M680.4 500.1L684.6 498.3" stroke="#303030" stroke-width="0.9"/>
<text x="689.6" y="500.7" font-size="7.2" fill="#303030" text-anchor="middle">20</text>
<path d="M682.6 511.2L687.2 511.2" stroke="#303030" stroke-width="0.9"/>
<text x="692.2" y="514.1" font-size="7.2" fill="#303030" text-anchor="middle">10</text>
<path d="M680.4 522.3L684.6 524.1" stroke="#303030" stroke-width="0.9"/>
<text x="689.0" y="529.3" font-size="7.2" fill="#303030" text-anchor="middle">5</text>
<path d="M674.1 531.7L677.4 535.0" stroke="#303030" stroke-width="0.9"/>
<text x="680.4" y="541.3" font-size="7.2" fill="#303030" text-anchor="middle">2</text>
<text x="621.6" y="550.8" font-size="9" fill="#303030" text-anchor="middle">V</text>
<text x="686.4" y="550.8" font-size="9" fill="#303030" text-anchor="middle">mV</text>
<circle cx="654.5" cy="512.3" r="29.8" fill="#303030" fill-opacity="0.5"/>
<circle cx="653.6" cy="511.0" r="29.2" fill="url(#knobO)"/>
<circle cx="653.6" cy="511.0" r="28.7" fill="none" stroke="url(#knobRim)" stroke-width="1.2"/>
<circle cx="653.6" cy="511.2" r="17.4" fill="url(#knobS)"/>
<circle cx="653.9" cy="511.6" r="15.6" fill="url(#knobR)"/>
<circle cx="653.6" cy="511.2" r="14.2" fill="url(#knobI)"/>
<path d="M626.0 511.2L634.4 506.3L634.4 516.1Z" fill="#10a050"/>
<path d="M657.0 519.1L660.5 515.1L663.0 521.2Z" fill="#10a050"/>
<rect x="636" y="542.5" width="35" height="13" fill="#ffffff"/>
<rect x="636" y="542" width="35.6" height="1.4" fill="#202020"/><rect x="636" y="542" width="1.4" height="13.4" fill="#202020"/>
<text x="638.6" y="550.8" font-size="9" fill="#2828a8" text-anchor="start">5</text>
<rect x="419" y="134" width="92" height="1" fill="#f0f0f0"/><rect x="419" y="134" width="1" height="26" fill="#f0f0f0"/>
<rect x="511" y="134" width="1" height="27" fill="#000"/><rect x="418" y="160" width="94" height="1" fill="#000"/>
<rect x="419" y="161" width="92" height="1" fill="#f0f0f0"/><rect x="419" y="161" width="1" height="184" fill="#f0f0f0"/>
<rect x="511" y="161" width="1" height="185" fill="#000"/><rect x="418" y="345" width="94" height="1" fill="#000"/>
<text x="462.1" y="152.7" font-size="12" fill="#f0909c" text-anchor="middle" font-weight="bold">Trigger</text>
<text x="449.4" y="171.2" font-size="9" fill="#2c2c2c" text-anchor="middle">Level</text>
<rect x="430" y="174" width="39" height="79" fill="#b0b0b0"/>
<rect x="429.5" y="173.5" width="40" height="80" fill="none" stroke="#f4f4f4" stroke-width="1"/>
<rect x="430.5" y="174.5" width="38" height="78" fill="none" stroke="#000" stroke-width="1"/>
<rect x="437" y="176" width="25" height="75" fill="url(#wheelV)"/>
<rect x="436.6" y="176" width="1" height="75" fill="#e0e0e0" fill-opacity="0.7"/><rect x="461.4" y="176" width="1.2" height="75" fill="#101010"/>
<path d="M437.6 180.4h2.8M461.4 180.4h-2.8M437.6 184.4h2.8M461.4 184.4h-2.8M437.6 188.4h2.8M461.4 188.4h-2.8M437.6 192.4h5M461.4 192.4h-5M437.6 196.4h2.8M461.4 196.4h-2.8M437.6 200.4h2.8M461.4 200.4h-2.8M437.6 204.4h2.8M461.4 204.4h-2.8M437.6 208.4h2.8M461.4 208.4h-2.8M437.6 212.4h5M461.4 212.4h-5M437.6 216.4h2.8M461.4 216.4h-2.8M437.6 220.4h2.8M461.4 220.4h-2.8M437.6 224.4h2.8M461.4 224.4h-2.8M437.6 228.4h2.8M461.4 228.4h-2.8M437.6 232.4h5M461.4 232.4h-5M437.6 236.4h2.8M461.4 236.4h-2.8M437.6 240.4h2.8M461.4 240.4h-2.8M437.6 244.4h2.8M461.4 244.4h-2.8M437.6 248.4h2.8M461.4 248.4h-2.8" stroke="#303030" stroke-opacity="0.8" stroke-width="0.9" fill="none"/>
<text x="449.6" y="195.0" font-size="9" fill="#0c0c2c" text-anchor="middle">-10</text>
<text x="449.6" y="215.0" font-size="9" fill="#0c0c2c" text-anchor="middle">0</text>
<text x="449.6" y="235.0" font-size="9" fill="#0c0c2c" text-anchor="middle">10</text>
<path d="M431.2 208.0l5.2 4.4l-5.2 4.4z" fill="#f80000"/><path d="M467.6 208.0l-5.2 4.4l5.2 4.4z" fill="#f80000"/>
<path d="M425.1 200.9l-2.8 7.2h2.05v7.899999999999983h-2.05l2.8 7.2l2.8 -7.2h-2.05v-7.899999999999983h2.05z" fill="#f0909c"/>
<text x="493.2" y="176.5" font-size="9" fill="#2c2c2c" text-anchor="end">AC</text>
<text x="493.2" y="190.6" font-size="9" fill="#2c2c2c" text-anchor="end">DC</text>
<rect x="496" y="164" width="13" height="32" fill="#b0b0b0"/>
<rect x="495.5" y="163.5" width="14" height="33" fill="none" stroke="#f4f4f4" stroke-width="1"/>
<rect x="496.5" y="164.5" width="12" height="31" fill="none" stroke="#000" stroke-width="1"/>
<rect x="501.1" y="169" width="2.2" height="22" fill="#000"/><rect x="503.3" y="169" width="0.8" height="22" fill="#d8d8d8"/>
<rect x="497.5" y="180" width="10" height="14" fill="#d4d4d4"/>
<rect x="497.5" y="180" width="10" height="1" fill="#fff"/><rect x="497.5" y="180" width="1" height="14" fill="#fff"/>
<rect x="506.5" y="180" width="1" height="14" fill="#585858"/><rect x="497.5" y="193" width="10" height="1" fill="#585858"/>
<rect x="499.2" y="182.2" width="6.4" height="1" fill="#505050"/>
<rect x="499.2" y="185.2" width="6.4" height="1" fill="#505050"/>
<rect x="499.2" y="188.3" width="6.4" height="1" fill="#505050"/>
<rect x="499.2" y="191.3" width="6.4" height="1" fill="#505050"/>
<rect x="496" y="208" width="13" height="33" fill="#b0b0b0"/>
<rect x="495.5" y="207.5" width="14" height="34" fill="none" stroke="#f4f4f4" stroke-width="1"/>
<rect x="496.5" y="208.5" width="12" height="32" fill="none" stroke="#000" stroke-width="1"/>
<rect x="501.1" y="213" width="2.2" height="23" fill="#000"/><rect x="503.3" y="213" width="0.8" height="23" fill="#d8d8d8"/>
<rect x="497.5" y="210" width="10" height="14" fill="#d4d4d4"/>
<rect x="497.5" y="210" width="10" height="1" fill="#fff"/><rect x="497.5" y="210" width="1" height="14" fill="#fff"/>
<rect x="506.5" y="210" width="1" height="14" fill="#585858"/><rect x="497.5" y="223" width="10" height="1" fill="#585858"/>
<rect x="499.2" y="212.2" width="6.4" height="1" fill="#505050"/>
<rect x="499.2" y="215.2" width="6.4" height="1" fill="#505050"/>
<rect x="499.2" y="218.3" width="6.4" height="1" fill="#505050"/>
<rect x="499.2" y="221.3" width="6.4" height="1" fill="#505050"/>
<path d="M484.2 222.4h3.7v-9.8h3.7M484.2 226.9h3.7v10.4h3.7" stroke="#383838" stroke-width="1.1" fill="none"/>
<rect x="496" y="254" width="14" height="14" fill="url(#btnP)"/>
<rect x="496" y="254" width="14" height="1" fill="#f0f0f0"/><rect x="496" y="254" width="1" height="14" fill="#f0f0f0"/>
<rect x="509" y="254" width="1" height="14" fill="#202020"/><rect x="496" y="267" width="14" height="1" fill="#202020"/>
<text x="492.2" y="265.2" font-size="9" fill="#2c2c2c" text-anchor="end">Auto</text>
<rect x="496" y="270" width="14" height="14" fill="url(#btnD)"/>
<rect x="496" y="270" width="14" height="1" fill="#f0f0f0"/><rect x="496" y="270" width="1" height="14" fill="#f0f0f0"/>
<rect x="509" y="270" width="1" height="14" fill="#202020"/><rect x="496" y="283" width="14" height="1" fill="#202020"/>
<text x="492.6" y="280.4" font-size="9" fill="#2c2c2c" text-anchor="end">One-Shot</text>
<rect x="496" y="286" width="14" height="14" fill="url(#btnD)"/>
<rect x="496" y="286" width="14" height="1" fill="#f0f0f0"/><rect x="496" y="286" width="1" height="14" fill="#f0f0f0"/>
<rect x="509" y="286" width="1" height="14" fill="#202020"/><rect x="496" y="299" width="14" height="1" fill="#202020"/>
<text x="457.6" y="295.6" font-size="9" fill="#2c2c2c" textLength="35" lengthAdjust="spacing">Cursors</text>
<text x="464.4" y="316.2" font-size="9" fill="#2c2c2c" text-anchor="middle">Source</text>
<text x="444.8" y="327.0" font-size="9" fill="#ffff00" text-anchor="middle" font-weight="bold">A</text>
<text x="459.3" y="327.0" font-size="9" fill="#189cf0" text-anchor="middle" font-weight="bold">B</text>
<text x="473.6" y="327.0" font-size="9" fill="#e8108c" text-anchor="middle" font-weight="bold">C</text>
<text x="488.2" y="327.0" font-size="9" fill="#10a050" text-anchor="middle" font-weight="bold">D</text>
<rect x="434" y="330" width="62" height="13" fill="#9c9c9c"/>
<rect x="433.5" y="329.5" width="63" height="14" fill="none" stroke="#f4f4f4" stroke-width="1"/>
<rect x="434.5" y="330.5" width="61" height="12" fill="none" stroke="#000" stroke-width="1"/>
<rect x="439" y="335.2" width="51" height="2.6" fill="#000"/>
<rect x="435" y="332" width="15" height="9" fill="#c8c8c8"/>
<rect x="435" y="332" width="15" height="1" fill="#fff"/><rect x="435" y="332" width="1" height="9" fill="#fff"/>
<rect x="449" y="332" width="1" height="9" fill="#505050"/><rect x="435" y="340" width="15" height="1" fill="#505050"/>
<rect x="438.0" y="334" width="1" height="5" fill="#585858"/>
<rect x="440.6" y="334" width="1" height="5" fill="#585858"/>
<rect x="443.2" y="334" width="1" height="5" fill="#585858"/>
<rect x="445.8" y="334" width="1" height="5" fill="#585858"/>
<rect x="419" y="346" width="92" height="1" fill="#f0f0f0"/><rect x="419" y="346" width="1" height="26" fill="#f0f0f0"/>
<rect x="511" y="346" width="1" height="27" fill="#000"/><rect x="418" y="372" width="94" height="1" fill="#000"/>
<rect x="419" y="373" width="92" height="1" fill="#f0f0f0"/><rect x="419" y="373" width="1" height="184" fill="#f0f0f0"/>
<rect x="511" y="373" width="1" height="185" fill="#000"/><rect x="418" y="557" width="94" height="1" fill="#000"/>
<text x="462.4" y="364.0" font-size="12.2" fill="#e88420" text-anchor="middle" font-weight="bold">Horizontal</text>
<text x="464.0" y="386.0" font-size="9" fill="#2c2c2c" text-anchor="middle">Source</text>
<path d="M431 395l10 -6.2v6.2" stroke="#e88420" stroke-width="1.1" fill="none"/>
<text x="450.5" y="395.2" font-size="9" fill="#ffff00" text-anchor="middle" font-weight="bold">A</text>
<text x="465.2" y="395.2" font-size="9" fill="#189cf0" text-anchor="middle" font-weight="bold">B</text>
<text x="479.7" y="395.2" font-size="9" fill="#e8108c" text-anchor="middle" font-weight="bold">C</text>
<text x="494.3" y="395.2" font-size="9" fill="#10a050" text-anchor="middle" font-weight="bold">D</text>
<rect x="427" y="399" width="78" height="13" fill="#9c9c9c"/>
<rect x="426.5" y="398.5" width="79" height="14" fill="none" stroke="#f4f4f4" stroke-width="1"/>
<rect x="427.5" y="399.5" width="77" height="12" fill="none" stroke="#000" stroke-width="1"/>
<rect x="432" y="404.2" width="67" height="2.6" fill="#000"/>
<rect x="428" y="401" width="15" height="9" fill="#c8c8c8"/>
<rect x="428" y="401" width="15" height="1" fill="#fff"/><rect x="428" y="401" width="1" height="9" fill="#fff"/>
<rect x="442" y="401" width="1" height="9" fill="#505050"/><rect x="428" y="409" width="15" height="1" fill="#505050"/>
<rect x="431.0" y="403" width="1" height="5" fill="#585858"/>
<rect x="433.6" y="403" width="1" height="5" fill="#585858"/>
<rect x="436.2" y="403" width="1" height="5" fill="#585858"/>
<rect x="438.8" y="403" width="1" height="5" fill="#585858"/>
<text x="464.0" y="424.4" font-size="9" fill="#2c2c2c" text-anchor="middle">Position</text>
<rect x="426" y="427" width="81" height="39" fill="#b0b0b0"/>
<rect x="425.5" y="426.5" width="82" height="40" fill="none" stroke="#f4f4f4" stroke-width="1"/>
<rect x="426.5" y="427.5" width="80" height="38" fill="none" stroke="#000" stroke-width="1"/>
<rect x="428" y="434.5" width="75" height="24" fill="url(#wheelH)"/>
<rect x="428" y="434" width="75" height="1" fill="#606060"/><rect x="428" y="458" width="75" height="1.4" fill="#1c1c1c"/>
<path d="M431.0 435v2M431.0 458v-2M433.0 435v2M433.0 458v-2M435.0 435v3M435.0 458v-3M437.0 435v2M437.0 458v-2M439.0 435v2M439.0 458v-2M441.0 435v2M441.0 458v-2M443.0 435v2M443.0 458v-2M445.0 435v4M445.0 458v-4M447.0 435v2M447.0 458v-2M449.0 435v2M449.0 458v-2M451.0 435v2M451.0 458v-2M453.0 435v2M453.0 458v-2M455.0 435v3M455.0 458v-3M457.0 435v2M457.0 458v-2M459.0 435v2M459.0 458v-2M461.0 435v2M461.0 458v-2M463.0 435v2M463.0 458v-2M465.0 435v4M465.0 458v-4M467.0 435v2M467.0 458v-2M469.0 435v2M469.0 458v-2M471.0 435v2M471.0 458v-2M473.0 435v2M473.0 458v-2M475.0 435v3M475.0 458v-3M477.0 435v2M477.0 458v-2M479.0 435v2M479.0 458v-2M481.0 435v2M481.0 458v-2M483.0 435v2M483.0 458v-2M485.0 435v4M485.0 458v-4M487.0 435v2M487.0 458v-2M489.0 435v2M489.0 458v-2M491.0 435v2M491.0 458v-2M493.0 435v2M493.0 458v-2M495.0 435v3M495.0 458v-3M497.0 435v2M497.0 458v-2M499.0 435v2M499.0 458v-2M501.0 435v2M501.0 458v-2" stroke="#303030" stroke-opacity="0.75" stroke-width="0.9" fill="none"/>
<text x="444.2" y="448.8" font-size="9" fill="#0c0c2c" text-anchor="middle">210</text>
<text x="464.8" y="448.8" font-size="9" fill="#0c0c2c" text-anchor="middle">200</text>
<text x="484.8" y="448.8" font-size="9" fill="#0c0c2c" text-anchor="middle">190</text>
<path d="M460.2 428.4h9l-4.5 4.6z" fill="#f80000"/><path d="M460.2 464h9l-4.5 -4.6z" fill="#f80000"/>
<path d="M421.2 555.4V512.3A44.4 44.4 0 0 1 510.0 512.3V555.4Z" fill="#ffffff" stroke="#303030" stroke-width="1"/>
<path d="M480.8 488.8L490.3 473.1L487.7 471.5L478.2 487.3Z" fill="#b0b0b0"/>
<path d="M480.8 488.8L489.4 474.4M478.2 487.3L486.5 473.6" stroke="#303030" stroke-width="1" fill="none"/>
<rect x="446.2" y="511.2" width="38.6" height="45.2" fill="#b0b0b0"/>
<path d="M446.2 529.2V555.4M484.8 529.2V555.4" stroke="#303030" stroke-width="1"/>
<path d="M476.7 484.4L478.5 480.2" stroke="#303030" stroke-width="0.9"/>
<text x="479.4" y="479.4" font-size="7.2" fill="#303030" text-anchor="middle">0.1</text>
<path d="M469.0 482.4L469.5 477.8" stroke="#303030" stroke-width="0.9"/>
<text x="470.9" y="474.4" font-size="7.2" fill="#303030" text-anchor="middle">0.2</text>
<path d="M461.1 482.6L460.3 478.0" stroke="#303030" stroke-width="0.9"/>
<text x="460.0" y="474.4" font-size="7.2" fill="#303030" text-anchor="middle">0.5</text>
<path d="M453.5 484.9L451.5 480.7" stroke="#303030" stroke-width="0.9"/>
<text x="450.6" y="478.5" font-size="7.2" fill="#303030" text-anchor="middle">1</text>
<path d="M446.8 489.1L443.8 485.7" stroke="#303030" stroke-width="0.9"/>
<text x="440.3" y="484.7" font-size="7.2" fill="#303030" text-anchor="middle">2</text>
<path d="M441.5 495.1L437.7 492.5" stroke="#303030" stroke-width="0.9"/>
<text x="433.1" y="491.9" font-size="7.2" fill="#303030" text-anchor="middle">5</text>
<path d="M438.0 502.2L433.6 500.8" stroke="#303030" stroke-width="0.9"/>
<text x="427.6" y="502.2" font-size="7.2" fill="#303030" text-anchor="middle">10</text>
<path d="M436.6 510.1L432.0 509.9" stroke="#303030" stroke-width="0.9"/>
<text x="426.7" y="512.1" font-size="7.2" fill="#303030" text-anchor="middle">20</text>
<path d="M437.4 518.0L432.9 519.0" stroke="#303030" stroke-width="0.9"/>
<text x="426.7" y="524.0" font-size="7.2" fill="#303030" text-anchor="middle">50</text>
<path d="M440.3 525.4L436.3 527.6" stroke="#303030" stroke-width="0.9"/>
<text x="428.5" y="534.2" font-size="7.2" fill="#303030" text-anchor="middle">100</text>
<path d="M445.1 531.7L441.8 535.0" stroke="#303030" stroke-width="0.9"/>
<text x="437.0" y="543.0" font-size="7.2" fill="#303030" text-anchor="middle">200</text>
<path d="M486.1 490.7L489.4 487.4" stroke="#303030" stroke-width="0.9"/>
<text x="491.2" y="485.9" font-size="7.2" fill="#303030" text-anchor="middle">50</text>
<path d="M490.7 496.7L494.7 494.4" stroke="#303030" stroke-width="0.9"/>
<text x="498.3" y="492.2" font-size="7.2" fill="#303030" text-anchor="middle">20</text>
<path d="M493.6 503.7L498.1 502.5" stroke="#303030" stroke-width="0.9"/>
<text x="501.5" y="502.2" font-size="7.2" fill="#303030" text-anchor="middle">10</text>
<path d="M494.6 511.2L499.2 511.2" stroke="#303030" stroke-width="0.9"/>
<text x="504.2" y="513.0" font-size="7.2" fill="#303030" text-anchor="middle">5</text>
<path d="M493.6 518.7L498.1 519.9" stroke="#303030" stroke-width="0.9"/>
<text x="503.7" y="523.1" font-size="7.2" fill="#303030" text-anchor="middle">2</text>
<path d="M490.7 525.7L494.7 528.0" stroke="#303030" stroke-width="0.9"/>
<text x="501.4" y="535.1" font-size="7.2" fill="#303030" text-anchor="middle">1</text>
<path d="M486.1 531.7L489.4 535.0" stroke="#303030" stroke-width="0.9"/>
<text x="493.4" y="543.0" font-size="7.2" fill="#303030" text-anchor="middle">0.5</text>
<text x="432.0" y="550.8" font-size="9" fill="#303030" text-anchor="middle">ms</text>
<text x="497.0" y="550.8" font-size="9" fill="#303030" text-anchor="middle">&#181;s</text>
<circle cx="466.5" cy="512.3" r="29.8" fill="#303030" fill-opacity="0.5"/>
<circle cx="465.6" cy="511.0" r="29.2" fill="url(#knobO)"/>
<circle cx="465.6" cy="511.0" r="28.7" fill="none" stroke="url(#knobRim)" stroke-width="1.2"/>
<circle cx="465.6" cy="511.2" r="17.4" fill="url(#knobS)"/>
<circle cx="465.9" cy="511.6" r="15.6" fill="url(#knobR)"/>
<circle cx="465.6" cy="511.2" r="14.2" fill="url(#knobI)"/>
<path d="M441.5 524.6L446.4 516.2L451.2 524.8Z" fill="#e88420"/>
<path d="M469.0 519.1L472.5 515.1L475.0 521.2Z" fill="#e88420"/>
<rect x="448" y="542.5" width="35" height="13" fill="#ffffff"/>
<rect x="448" y="542" width="35.6" height="1.4" fill="#202020"/><rect x="448" y="542" width="1.4" height="13.4" fill="#202020"/>
<text x="450.6" y="550.8" font-size="9" fill="#2828a8" text-anchor="start">0.1</text>
</svg>
</body></html>
